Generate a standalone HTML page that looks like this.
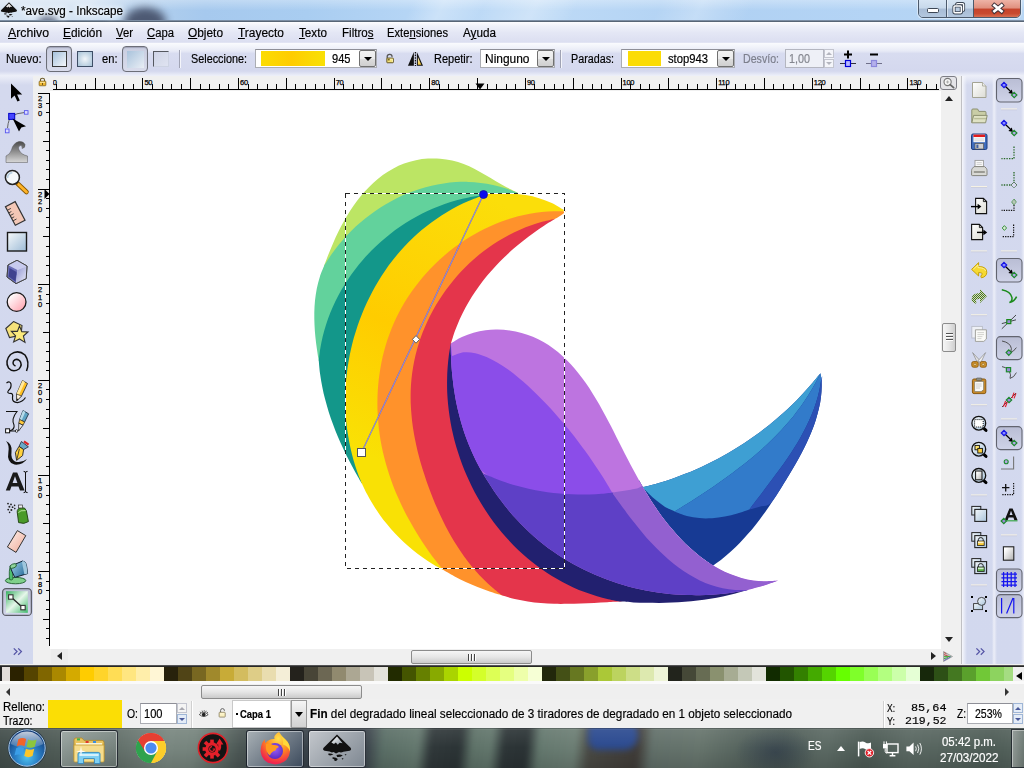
<!DOCTYPE html>
<html><head><meta charset="utf-8"><title>ave.svg - Inkscape</title>
<style>
*{box-sizing:border-box;margin:0;padding:0}
html,body{width:1024px;height:768px;overflow:hidden;background:#fff;font-family:"Liberation Sans",sans-serif;font-size:12px;color:#000}
.a{position:absolute}
.t{position:absolute;white-space:nowrap;line-height:14px;transform-origin:0 0;-webkit-text-stroke:0.18px currentColor}
#title{left:0;top:0;width:1024px;height:22px;background:linear-gradient(115deg,rgba(255,255,255,0) 40%,rgba(255,255,255,.28) 43%,rgba(255,255,255,.05) 47%,rgba(255,255,255,.3) 52%,rgba(255,255,255,0) 56%,rgba(255,255,255,0) 64%,rgba(255,255,255,.25) 68%,rgba(255,255,255,0) 73%),linear-gradient(90deg,#d6e4f3 0,#d2e2f3 9%,#b4d0ec 13%,#a6c9ee 20%,#a9cdf1 30%,#b8d7f6 42%,#bcd9f6 55%,#b0d1f3 70%,#b4d4f5 85%,#b8d6f4 100%)}
#titleline{left:0;top:20px;width:1024px;height:2px;background:linear-gradient(180deg,#8fa2ba,#46525f)}
#menubar{left:0;top:22px;width:1024px;height:21px;background:linear-gradient(180deg,#fdfdff 0,#f0f2fa 18%,#e4e7f5 50%,#dcdff1 94%,#e6e8f5 100%)}
#toolbar{left:0;top:42.5px;width:1024px;height:33.5px;background:linear-gradient(180deg,#fafbfe 0,#f1f3fa 4px,#e7eaf6 8px,#d8dcf0 10.5px,#d4d8ee 28px,#e4e7f5 31px,#eef0f9 100%)}
.tbx{background:linear-gradient(180deg,#eceef8 0,#d4d9ee 9px,#d2d8ee 100%)}
#canvasbg{left:33px;top:76px;width:929px;height:590px;background:#f0f0f0}
#canvas{left:50px;top:91px;width:891px;height:558px;background:#fff}
#palette{left:0;top:665px;width:1024px;height:18px;background:#f0f0f0}
#status{left:0;top:683px;width:1024px;height:46px;background:#f0f0f0}
#taskbar{left:0;top:728px;width:1024px;height:40px;background:#4d5a57}
.combo{position:absolute;background:#fff;border:1px solid #abadb3;border-top-color:#8e8f97}
.cbtn{position:absolute;background:linear-gradient(180deg,#f2f2f2 0,#ebebeb 50%,#dddddd 51%,#cfcfcf 100%);border:1px solid #707070;border-radius:2px}
.cbtn:after{content:"";position:absolute;left:50%;top:50%;margin-left:-4px;margin-top:-2px;border:4px solid transparent;border-top:4px solid #000;border-bottom:0}
.sep{position:absolute;width:2px;border-left:1px solid #a0a3b4;border-right:1px solid #f4f5fb}
.tog{position:absolute;border:1.3px solid #6c6e78;border-radius:4px;background:linear-gradient(180deg,#c9cde0,#d9dcec);box-shadow:inset 0 1px 1px rgba(90,92,110,.35)}
</style></head><body>
<div class="a" id="title"></div>
<div class="a" style="left:110px;top:0;width:70px;height:21px;overflow:hidden"><div class="a" style="left:14px;top:7px;width:42px;height:30px;border-radius:50%;background:#3c455e;filter:blur(4px);opacity:.85"></div></div>
<div class="a" style="left:30px;top:0;width:40px;height:21px;overflow:hidden"><div class="a" style="left:8px;top:14px;width:20px;height:16px;border-radius:50%;background:#4c556e;filter:blur(3px);opacity:.7"></div></div>
<div class="a" style="left:0;top:0;width:1024px;height:21px;background:linear-gradient(180deg,rgba(255,255,255,.3),rgba(255,255,255,0) 50%)"></div>
<div class="a" id="titleline"></div>
<svg class="a" style="left:0;top:1px" width="18" height="19" viewBox="0 0 18 19">
<path d="M9 1.2 L1 9.2 Q0.4 10.4 1.8 10.8 L4.6 11.2 Q6 12 7.2 11.4 L8.6 12.2 L10.2 11.4 Q11.4 12 12.6 11.3 L16 10.8 Q17.6 10.2 16.8 9 Z" fill="#111"/>
<path d="M9 2.4 L6 5.6 L7.4 6.4 L8.4 5.6 L9.4 6.8 L10.4 5.8 L12.2 6 Z" fill="#e8e8e8"/>
<path d="M4.2 12.4 Q6 12.2 7.2 13 Q5.6 13.8 4.2 13.2 Z M9 13.2 Q11 12.6 12.6 13.4 Q11 14.6 9.4 14.4 Z M6.4 14.6 Q8.4 14.4 9.6 15.6 Q9 17 7.6 16.6 Q8 15.6 6.4 15.2 Z M11.6 15 L12.8 15.2 L12.2 16 Z" fill="#111"/>
</svg>
<span class="t" style="left:21px;top:3.5px;font-size:12px;color:#000;transform:scaleX(0.9740);text-shadow:0 0 5px #fff,0 0 8px #fff,0 0 10px rgba(255,255,255,.8);">*ave.svg - Inkscape</span>
<div class="a" style="left:918px;top:-1px;width:103px;height:19px;border:1px solid #4c5a6c;border-radius:0 0 5px 5px;overflow:hidden;box-shadow:0 0 0 1px rgba(255,255,255,.45)">
<div class="a" style="left:0;top:0;width:28px;height:18px;background:linear-gradient(180deg,#d6e4f3 0,#c7d8ea 45%,#a8bcd5 50%,#b4c8df 100%);border-right:1px solid #4c5a6c"></div>
<div class="a" style="left:28px;top:0;width:27px;height:18px;background:linear-gradient(180deg,#d6e4f3 0,#c7d8ea 45%,#a8bcd5 50%,#b4c8df 100%);border-right:1px solid #4c5a6c;box-shadow:inset 1px 0 0 rgba(255,255,255,.5)"></div>
<div class="a" style="left:55px;top:0;width:47px;height:18px;background:linear-gradient(180deg,#eeb3a6 0,#e08f7e 45%,#c5432c 50%,#c84a30 75%,#dc7a5c 100%)"></div>
</div>
<svg class="a" style="left:918px;top:0" width="103" height="18" viewBox="0 0 103 18">
<rect x="9.5" y="8.5" width="11" height="4" fill="#fff" stroke="#3c4654" stroke-width="1" rx="1"/>
<rect x="38.6" y="3.6" width="7" height="7" fill="none" stroke="#3c4654" stroke-width="3" rx="1"/>
<rect x="38.6" y="3.6" width="7" height="7" fill="none" stroke="#fff" stroke-width="1.3" rx="1"/>
<rect x="36" y="6" width="7.4" height="6.8" fill="#b9cbe0" stroke="#3c4654" stroke-width="3.2" rx="1"/>
<rect x="36" y="6" width="7.4" height="6.8" fill="none" stroke="#fff" stroke-width="1.5" rx="1"/>
<path d="M76.4 5.4 L83.6 11.2 M83.6 5.4 L76.4 11.2" stroke="#40323a" stroke-width="4.6" stroke-linecap="square"/>
<path d="M76.4 5.4 L83.6 11.2 M83.6 5.4 L76.4 11.2" stroke="#fff" stroke-width="2.7" stroke-linecap="square"/>
</svg>
<div class="a" id="menubar"></div>
<span class="t" style="left:8px;top:26.3px;font-size:12.5px;color:#000;transform:scaleX(0.9835);"><u>A</u>rchivo</span>
<span class="t" style="left:63px;top:26.3px;font-size:12.5px;color:#000;transform:scaleX(0.9509);"><u>E</u>dición</span>
<span class="t" style="left:116px;top:26.3px;font-size:12.5px;color:#000;transform:scaleX(0.9052);"><u>V</u>er</span>
<span class="t" style="left:147px;top:26.3px;font-size:12.5px;color:#000;transform:scaleX(0.9033);"><u>C</u>apa</span>
<span class="t" style="left:188px;top:26.3px;font-size:12.5px;color:#000;transform:scaleX(0.9500);"><u>O</u>bjeto</span>
<span class="t" style="left:238px;top:26.3px;font-size:12.5px;color:#000;transform:scaleX(0.9549);"><u>T</u>rayecto</span>
<span class="t" style="left:298.5px;top:26.3px;font-size:12.5px;color:#000;transform:scaleX(0.9367);"><u>T</u>exto</span>
<span class="t" style="left:341.5px;top:26.3px;font-size:12.5px;color:#000;transform:scaleX(0.9256);">Filtro<u>s</u></span>
<span class="t" style="left:387px;top:26.3px;font-size:12.5px;color:#000;transform:scaleX(0.8956);">Exte<u>n</u>siones</span>
<span class="t" style="left:462.5px;top:26.3px;font-size:12.5px;color:#000;transform:scaleX(0.9366);">A<u>y</u>uda</span>
<div class="a" id="toolbar"></div>
<span class="t" style="left:6px;top:51.5px;font-size:12px;color:#000;transform:scaleX(0.9334);">Nuevo:</span>
<div class="tog" style="left:46px;top:46px;width:26px;height:26px"></div>
<div class="a" style="left:51.5px;top:51px;width:15.5px;height:15.5px;border:1.7px solid #383838;background:linear-gradient(135deg,#a6c2dc,#f4f7fb)"></div>
<div class="a" style="left:77px;top:51px;width:15.5px;height:15.5px;border:1.6px solid #3e4e66;background:radial-gradient(circle at 50% 50%,#f2f6fa 0,#b9cfe0 75%,#a8c2d8 100%)"></div>
<span class="t" style="left:102px;top:51.5px;font-size:12px;color:#000;transform:scaleX(0.9288);">en:</span>
<div class="tog" style="left:122px;top:46px;width:26px;height:26px"></div>
<div class="a" style="left:126.5px;top:50.5px;width:17px;height:17px;background:linear-gradient(135deg,#a9c3dc,#e9eef5)"></div>
<div class="a" style="left:153px;top:51px;width:16px;height:16px;border:1.5px solid;border-color:#55585f #cdd3e3 #cdd3e3 #55585f;background:linear-gradient(135deg,#cfd4e6,#dfe3f1)"></div>
<div class="sep" style="left:179px;top:50px;height:18px"></div>
<span class="t" style="left:190.5px;top:51.5px;font-size:12px;color:#000;transform:scaleX(0.9025);">Seleccione:</span>
<div class="combo" style="left:255px;top:49px;width:122px;height:19px"></div>
<div class="a" style="left:261px;top:51px;width:64px;height:15px;background:linear-gradient(90deg,#fbdc03 0,#ffcc00 48%,#fbd704 75%,#f9e005 100%)"></div>
<span class="t" style="left:331.5px;top:51.5px;font-size:12px;color:#000;transform:scaleX(0.9236);">945</span>
<div class="cbtn" style="left:359px;top:50px;width:17px;height:17px"></div>
<svg class="a" style="left:385px;top:53px" width="10" height="11" viewBox="0 0 12 13">
<path d="M2.6 6.4 V4.2 Q2.8 1.4 5.8 1.6 Q8.4 1.8 8.6 4.6" fill="none" stroke="#555" stroke-width="1.5"/>
<rect x="2.2" y="6" width="7.8" height="5.6" rx="0.6" fill="#f4e27a" stroke="#5a4a1a" stroke-width="1.1"/>
<rect x="3.4" y="7.2" width="2.2" height="1.6" fill="#6a5a20"/>
<path d="M6 7.4 H9 V10.6" stroke="#fff8c8" stroke-width="0.9" fill="none"/>
</svg>
<svg class="a" style="left:406px;top:50px" width="20" height="18" viewBox="0 0 20 18">
<defs><linearGradient id="gMi" x1="0" y1="0" x2="0.4" y2="1"><stop offset="0" stop-color="#fff8d0"/><stop offset="1" stop-color="#f2c53a"/></linearGradient></defs>
<path d="M1.9 15.8 L7.9 15.8 L7.9 2 Z" fill="#111"/>
<path d="M10.9 2 L10.9 15.8 L17 15.8 Z" fill="#111"/>
<path d="M11.9 7 L11.9 14.8 L15.3 14.8 Z" fill="url(#gMi)"/>
<path d="M9.4 2 V16" stroke="#111" stroke-width="1.3" stroke-dasharray="1.6 1"/>
</svg>
<span class="t" style="left:434px;top:51.5px;font-size:12px;color:#000;transform:scaleX(0.9160);">Repetir:</span>
<div class="combo" style="left:480px;top:49px;width:75px;height:19px"></div>
<span class="t" style="left:485px;top:51.5px;font-size:12px;color:#000;transform:scaleX(0.9955);">Ninguno</span>
<div class="cbtn" style="left:537px;top:50px;width:17px;height:17px"></div>
<div class="sep" style="left:560px;top:50px;height:18px"></div>
<span class="t" style="left:571px;top:51.5px;font-size:12px;color:#000;transform:scaleX(0.8953);">Paradas:</span>
<div class="combo" style="left:621px;top:49px;width:114px;height:19px"></div>
<div class="a" style="left:627.5px;top:51px;width:33px;height:15px;background:#fbdc05"></div>
<span class="t" style="left:667.5px;top:51.5px;font-size:12px;color:#000;transform:scaleX(0.9367);">stop943</span>
<div class="cbtn" style="left:717px;top:50px;width:17px;height:17px"></div>
<span class="t" style="left:743px;top:51.5px;font-size:12px;color:#7c7f8c;transform:scaleX(0.8848);">Desvío:</span>
<div class="a" style="left:785px;top:49px;width:39px;height:19px;background:#eef0f7;border:1px solid #b4b6c0"></div>
<span class="t" style="left:789px;top:51.5px;font-size:12px;color:#84868f;transform:scaleX(0.8990);">1,00</span>
<div class="a" style="left:824px;top:49px;width:10px;height:19px;background:#f0f1f7">
<div class="a" style="left:0;top:0;width:10px;height:9px;border:1px solid #c3c5cf;background:#f4f5fa"></div>
<div class="a" style="left:0;top:10px;width:10px;height:9px;border:1px solid #c3c5cf;background:#f4f5fa"></div>
<div class="a" style="left:2px;top:3px;border:3px solid transparent;border-bottom:3px solid #b3b5be;border-top:0"></div>
<div class="a" style="left:2px;top:13px;border:3px solid transparent;border-top:3px solid #b3b5be;border-bottom:0"></div>
</div>
<svg class="a" style="left:839px;top:48px" width="46" height="24" viewBox="0 0 46 24">
<path d="M5 6.5 H13 M9 2.5 V10.5" stroke="#000" stroke-width="2"/>
<path d="M1 15.5 H17" stroke="#30303a" stroke-width="1"/>
<rect x="6.5" y="12.5" width="5" height="6" fill="#b8b8ff" stroke="#0000d8" stroke-width="1.2"/>
<path d="M31 6.5 H39" stroke="#000" stroke-width="2"/>
<path d="M27 15.5 H43" stroke="#70708a" stroke-width="1"/>
<rect x="32.5" y="12.5" width="5" height="6" fill="#b4b0ec" stroke="#8c88dc" stroke-width="1.2"/>
</svg>
<div class="a tbx" style="left:0;top:76px;width:33px;height:590px"></div>
<svg class="a" style="left:0;top:76px" width="34" height="590" viewBox="0 76 34 590">
<defs>
<linearGradient id="gTw" x1="0" y1="0" x2="0" y2="1"><stop offset="0" stop-color="#4a4a4a"/><stop offset="1" stop-color="#d8d8d8"/></linearGradient>
<linearGradient id="gRc" x1="0" y1="0" x2="1" y2="1"><stop offset="0" stop-color="#f7fafc"/><stop offset="1" stop-color="#9dbbd6"/></linearGradient>
<linearGradient id="gCi" x1="0" y1="0" x2="1" y2="1"><stop offset="0.15" stop-color="#ffffff"/><stop offset="1" stop-color="#ff9aa8"/></linearGradient>
<linearGradient id="gGr" x1="0" y1="0" x2="1" y2="1"><stop offset="0" stop-color="#38b062"/><stop offset="0.5" stop-color="#e6f6ea"/><stop offset="1" stop-color="#3db868"/></linearGradient><linearGradient id="gPrL" x1="0" y1="0" x2="0" y2="1"><stop offset="0" stop-color="#b9bdd2"/><stop offset="1" stop-color="#d2d6ea"/></linearGradient><linearGradient id="gBk" x1="0" y1="0" x2="1" y2="0.6"><stop offset="0" stop-color="#a8d4e4"/><stop offset="0.5" stop-color="#6aa4c8"/><stop offset="1" stop-color="#2f6f9c"/></linearGradient>
<linearGradient id="gBx" x1="0" y1="0" x2="1" y2="1"><stop offset="0" stop-color="#8f93cf"/><stop offset="1" stop-color="#eef0fb"/></linearGradient>
<linearGradient id="gEr" x1="0" y1="0" x2="1" y2="1"><stop offset="0" stop-color="#fff4ee"/><stop offset="1" stop-color="#efa896"/></linearGradient>
</defs>
<!-- select arrow -->
<path d="M11 83.5 L11 98.8 L14.6 95.6 L17.4 101.6 L19.8 100.5 L17.1 94.6 L22.2 94.4 Z" fill="#000"/>
<!-- node tool -->
<path d="M7.5 128 Q8.5 118 12 116.5 Q16 113 24 112.6" fill="none" stroke="#555" stroke-width="0.9"/>
<rect x="8.7" y="113.4" width="6" height="6" fill="#4646ff" stroke="#0000c8" stroke-width="1"/>
<rect x="24.4" y="110.6" width="3.6" height="3.6" fill="#dcdcff" stroke="#5858ee" stroke-width="0.9"/>
<rect x="5.4" y="129" width="3.6" height="3.8" fill="#dcdcff" stroke="#5858ee" stroke-width="0.9"/>
<path d="M12.6 118.6 L19 131.6 L21.3 127.4 L26 126.2 Z" fill="#000"/>
<!-- tweak -->
<path d="M6 162.5 V156 Q10 154.5 11.5 150 Q13 143 19 141.5 Q23.5 141 25 144.5 Q25.5 148 22 148.5 Q23 146 20.5 145.6 Q17.5 146.5 19 150 Q21 154.5 27.5 156 V162.5 Z" fill="url(#gTw)" stroke="#555" stroke-width="0.5"/>
<!-- zoom -->
<path d="M17.5 183.5 L26.5 192" stroke="#8a5a00" stroke-width="4.6" stroke-linecap="round"/>
<path d="M18.6 184.6 L26.5 192" stroke="#ffb429" stroke-width="2.8" stroke-linecap="round"/>
<circle cx="12.4" cy="177.4" r="7" fill="#f4f8fb" stroke="#222" stroke-width="1.5"/>
<path d="M7.6 178 A5 5 0 0 1 12.4 172.6" fill="none" stroke="#b9d0e2" stroke-width="1.6"/>
<!-- measure -->
<g transform="rotate(-28 15 213)"><rect x="9.5" y="203" width="11" height="21" fill="#f3c7b6" stroke="#333" stroke-width="1.2"/>
<path d="M9.5 207 h4 M9.5 210 h3 M9.5 213 h4 M9.5 216 h3 M9.5 219 h4" stroke="#333" stroke-width="0.8"/></g>
<!-- rect -->
<rect x="7.5" y="232.5" width="19" height="18.5" fill="url(#gRc)" stroke="#1a1a1a" stroke-width="1.4"/>
<!-- 3d box -->
<path d="M17 260.3 L27 266 L26.2 278.6 L16 283.6 L7 277 L8 265 Z" fill="#e9ebfa" stroke="#444" stroke-width="1"/>
<path d="M8 265 L17 260.3 L27 266 L17.5 270 Z" fill="#c8cbee"/>
<path d="M8 265 L17.5 270 L16 283.6 L7 277 Z" fill="#6d70b8"/>
<path d="M9.5 268 L16.5 272 L15.5 281.5 L8.6 276.5 Z" fill="#3f428f"/>
<path d="M17.5 270 L27 266 L26.2 278.6 L16 283.6 Z" fill="url(#gBx)"/>
<path d="M17 260.3 L27 266 L26.2 278.6 L16 283.6 L7 277 L8 265 Z" fill="none" stroke="#444" stroke-width="1"/>
<!-- circle -->
<circle cx="16.6" cy="302" r="9.4" fill="url(#gCi)" stroke="#1a1a1a" stroke-width="1.3"/>
<!-- star -->
<path d="M13.5 321.6 L22 325.5 L21 335 L9.5 337.5 L5.8 328.5 Z" fill="#f6e27a" stroke="#333" stroke-width="1.1"/>
<path d="M19.5 326 L21.8 331.6 L28 332 L23.4 336 L25 342.4 L19.5 339 L13.6 342 L15.6 335.8 L11.4 331.4 L17.4 331.4 Z" fill="#fbea7c" stroke="#333" stroke-width="1.1"/>
<!-- spiral -->
<path d="M15.5 366 Q12 364.5 13.5 361 Q16 358 19.5 360.5 Q23 364.5 19 369 Q13 373 8.5 368 Q4.5 361 10.5 354.5 Q18 349 25 355 Q30 362 26.5 371" fill="none" stroke="#111" stroke-width="1.5"/>
<!-- pencil -->
<path d="M6.5 383 Q10 380.5 11 384 Q11.5 388 8.5 390.5 Q6.5 393 10 393.5 Q13.5 393 12.5 397.5 Q12 402.5 17.5 402.6 Q22.5 402 25.5 397.5" fill="none" stroke="#111" stroke-width="1.2"/>
<path d="M22.5 380.5 L27.5 383.5 L21.5 396 L16.8 400.8 L16.5 394 Z" fill="#ffc022" stroke="#333" stroke-width="0.9"/>
<path d="M22.5 380.5 L25 382 L19 395 L16.5 394 Z" fill="#ffe9a0"/>
<path d="M16.5 394 L21.5 396 L16.8 400.8 Z" fill="#fff3dc" stroke="#333" stroke-width="0.7"/>
<path d="M16.7 398.6 L18.4 399.2 L16.8 400.8 Z" fill="#111"/>
<!-- pen / bezier -->
<path d="M6 411.5 H17 Q11 419 14 425 Q15 429.5 9.5 431" fill="none" stroke="#111" stroke-width="1.1"/>
<rect x="5.6" y="428.8" width="4" height="4" fill="#fff" stroke="#111" stroke-width="1"/>
<path d="M10 431 H16" stroke="#111" stroke-width="1"/><circle cx="16.6" cy="431" r="1.3" fill="#fff" stroke="#111" stroke-width="0.8"/>
<path d="M23 410.5 L28.6 413.8 L24.6 422 L19.6 419.4 Z" fill="#5fa4c4" stroke="#234" stroke-width="0.9"/>
<path d="M23 410.5 L25.4 412 L21.6 420.4 L19.6 419.4 Z" fill="#b7dbe9"/>
<path d="M19.6 419.4 L24.6 422 L23 425.2 L18.8 423.2 Z" fill="#ffc93a" stroke="#333" stroke-width="0.8"/>
<path d="M18.8 423.2 L23 425.2 L18.6 431 Z" fill="#e8e8e8" stroke="#222" stroke-width="0.8"/>
<!-- calligraphy -->
<path d="M6 441 Q12.5 444 11.5 451.5 Q10.5 459 15 461.5 Q21 463.5 27 459 Q22.5 465.5 14.5 464.6 Q6.5 462.6 8.4 452 Q9.5 445 6 441 Z" fill="#111"/>
<path d="M21.4 441.5 L28.4 446.8 L23.6 449.6 L19 446.4 Z" fill="#6aa9c8" stroke="#223" stroke-width="0.8"/>
<path d="M24 441.4 L28.6 444.6" stroke="#d22" stroke-width="2"/>
<path d="M19 446.4 L23.6 449.6 L22.6 455.6 L16.6 460.4 L15.4 452.6 Z" fill="#ffd23f" stroke="#222" stroke-width="0.9"/>
<path d="M19.4 448.8 L16.9 459.4" stroke="#222" stroke-width="0.8"/>
<!-- text -->
<path d="M5.8 490.6 L13 472.6 L17.2 472.6 L24.6 490.6 L20 490.6 L18.5 486.4 L11.4 486.4 L10 490.6 Z M12.6 483 L17.4 483 L15 476.2 Z" fill="#1a1a1a" fill-rule="evenodd"/>
<path d="M25.5 471.8 V492.2 M23.6 471.4 Q25.5 471.4 25.5 472.8 Q25.5 471.4 27.6 471.4 M23.6 492.6 Q25.5 492.6 25.5 491.2 Q25.5 492.6 27.6 492.6" fill="none" stroke="#111" stroke-width="1"/>
<!-- spray -->
<path d="M17.2 512 Q17 508.4 21.4 507.6 Q25.6 507.4 26.4 510.8 L28.4 521.6 Q24.4 524.6 18.6 522.6 Z" fill="#4a9a2a" stroke="#1d3d10" stroke-width="0.9"/>
<path d="M18.4 512.6 Q20 510 25.6 510.6" fill="none" stroke="#b7e39a" stroke-width="1"/>
<rect x="18.6" y="505" width="4" height="3" fill="#eee" stroke="#333" stroke-width="0.7"/>
<g fill="#222"><circle cx="8" cy="503.6" r="0.9"/><circle cx="11" cy="504.4" r="0.9"/><circle cx="9.4" cy="506.8" r="1"/><circle cx="12.6" cy="507.2" r="0.9"/><circle cx="14.6" cy="505.4" r="0.8"/><circle cx="8.2" cy="509.6" r="0.9"/><circle cx="11.4" cy="510" r="1"/><circle cx="14.8" cy="508.6" r="0.8"/><circle cx="9.6" cy="512.4" r="0.8"/></g>
<!-- eraser -->
<path d="M17.4 530.6 L25.8 535.6 L16 552.4 L7.4 547 Z" fill="url(#gEr)" stroke="#333" stroke-width="1"/>
<!-- bucket -->
<ellipse cx="15.6" cy="580.6" rx="10.2" ry="3.2" fill="#7fd08b" stroke="#1d5a2a" stroke-width="0.9"/>
<path d="M10.6 565.6 Q8.6 570 9.6 579.6 Q11.6 580.6 13 579 Q12 573 13.4 568 Z" fill="#4fbf6f" stroke="#1d5a2a" stroke-width="0.8"/>
<path d="M10 566.4 L22.6 561 Q25.6 561.4 26.4 564.6 L27.6 573.6 L14.8 577.4 Q12 572 10 566.4 Z" fill="url(#gBk)" stroke="#123" stroke-width="1"/>
<path d="M22.6 561 Q25.6 561.4 26.4 564.6 L27.6 573.6 L24.4 574.6 L22 562.4 Z" fill="#9fc7de"/>
<ellipse cx="13.2" cy="566" rx="3.4" ry="2" transform="rotate(-23 13.2 566)" fill="#8fd49c" stroke="#1d5a2a" stroke-width="0.8"/>
<!-- gradient tool (active) -->
<rect x="2.6" y="588.6" width="28.8" height="26.8" rx="3.5" fill="url(#gPrL)" stroke="#5c5e68" stroke-width="1.3"/>
<rect x="6" y="591.2" width="21.8" height="21.6" fill="url(#gGr)"/>
<path d="M11.6 597.6 L22.6 607.6" stroke="#222" stroke-width="1.3"/>
<rect x="8.6" y="594.8" width="4.4" height="4.4" fill="#fff" stroke="#333" stroke-width="1.1"/>
<rect x="20.8" y="605.4" width="4.4" height="4.4" fill="#fff" stroke="#333" stroke-width="1.1"/>
<!-- chevrons -->
<path d="M13.8 648.4 L17 651.6 L13.8 654.8 M18.2 648.4 L21.4 651.6 L18.2 654.8" fill="none" stroke="#5656a6" stroke-width="1.3"/>
</svg>
<div class="a" style="left:958px;top:76px;width:8px;height:590px;background:#f0f0f0"></div>
<div class="a" style="left:961px;top:76px;width:1px;height:590px;background:#c4c4c4"></div>
<div class="a tbx" style="left:962px;top:76px;width:31px;height:589px"></div>
<div class="a tbx" style="left:993px;top:76px;width:31px;height:589px"></div>
<div class="a" style="left:962px;top:76px;width:5px;height:589px;background:linear-gradient(90deg,#f6f7fc,rgba(246,247,252,0))"></div>
<div class="a" style="left:992px;top:76px;width:5px;height:589px;background:linear-gradient(90deg,rgba(240,241,250,0),#eceef8 40%,rgba(240,241,250,0))"></div>
<div class="a" style="left:1021px;top:76px;width:3px;height:589px;background:linear-gradient(90deg,rgba(240,241,250,0),#eceef8)"></div>
<svg class="a" style="left:962px;top:76px" width="62" height="590" viewBox="962 76 62 590"><defs>
<linearGradient id="gPr" x1="0" y1="0" x2="0" y2="1"><stop offset="0" stop-color="#b9bdd4"/><stop offset="1" stop-color="#cfd3e8"/></linearGradient>
<linearGradient id="gPg" x1="0" y1="0" x2="1" y2="1"><stop offset="0" stop-color="#ffffff"/><stop offset="1" stop-color="#dcdcd4"/></linearGradient>
<linearGradient id="gBl" x1="0" y1="0" x2="1" y2="1"><stop offset="0" stop-color="#f4f8fb"/><stop offset="1" stop-color="#a9c3da"/></linearGradient>
<linearGradient id="gPp" x1="0" y1="0" x2="1" y2="1"><stop offset="0.2" stop-color="#ffffff"/><stop offset="1" stop-color="#b0b0b0"/></linearGradient>
</defs><path d="M972.5 82.5 H982.5 L986 86 V97.5 H972.5 Z" fill="url(#gPg)" stroke="#a4a494" stroke-width="1"/><path d="M982.5 82.5 V86 H986" fill="#eee" stroke="#a4a494" stroke-width="0.8"/><path d="M971.8 122.6 V110 Q971.8 109 973 109 H977.6 L978.8 111.4 H985 Q986 111.4 986 112.6 V115" fill="#c9cda6" stroke="#8c9070" stroke-width="1"/><path d="M971.8 122.8 L973.6 115.4 H987.2 L985.6 122.8 Z" fill="#dfe2c4" stroke="#8c9070" stroke-width="1"/><path d="M974.2 118.6 H986" stroke="#b9bd98" stroke-width="1.4"/><rect x="971.5" y="134" width="15.5" height="15.5" rx="1.5" fill="#3f6cbc" stroke="#1f3f80" stroke-width="1"/><rect x="973.4" y="134.6" width="11.6" height="7.6" fill="#f4f4f4"/><rect x="973.4" y="134.6" width="11.6" height="2.4" fill="#e31c1c"/><path d="M974.4 139 h9.6 M974.4 140.6 h9.6" stroke="#d0d0d0" stroke-width="0.6"/><rect x="975" y="143.6" width="8.6" height="5.4" fill="#cfcfcf" stroke="#555" stroke-width="0.7"/><rect x="976.4" y="144.6" width="2" height="3.4" fill="#3f5fa0"/><rect x="975" y="160.4" width="8.4" height="6.6" fill="#fafafa" stroke="#9a9a9a" stroke-width="0.9"/><path d="M976.6 162.6 h5.2 M976.6 164.4 h5.2" stroke="#c4c4c4" stroke-width="0.8"/><path d="M971.6 175 V170.4 Q971.6 169.4 972.4 168.4 L974 166.6 H984.6 L986.4 168.4 Q987 169.4 987 170.4 V175 Q987 175.6 986.2 175.6 H972.4 Q971.6 175.6 971.6 175 Z" fill="#d9d9d5" stroke="#85857d" stroke-width="1"/><rect x="973.8" y="171.2" width="11" height="1.6" fill="#8a8a84"/><path d="M971 186.6 h16" stroke="#f6f2e4" stroke-width="1.2"/><path d="M971 187.5 h16" stroke="#c2c4d6" stroke-width="0.6"/><path d="M975.6 198.4 H983.4 L986.6 201.6 V213.6 H975.6 Z" fill="url(#gPg)" stroke="#111" stroke-width="1.1"/><path d="M983.4 198.4 V201.6 H986.6" fill="none" stroke="#111" stroke-width="0.9"/><path d="M971 206.6 H978" stroke="#000" stroke-width="1.4"/><path d="M981.4 206.6 l-3.8 -2.8 v5.6 Z" fill="#000"/><path d="M971.6 224.4 H979.4 L982.6 227.6 V239.6 H971.6 Z" fill="url(#gPg)" stroke="#111" stroke-width="1.1"/><path d="M979.4 224.4 V227.6 H982.6" fill="none" stroke="#111" stroke-width="0.9"/><path d="M977 232.4 H984" stroke="#000" stroke-width="1.4"/><path d="M987.2 232.4 l-3.8 -2.8 v5.6 Z" fill="#000"/><path d="M971 251 h16" stroke="#f6f2e4" stroke-width="1.2"/><path d="M971 251.9 h16" stroke="#c2c4d6" stroke-width="0.6"/><path d="M971.6 269.4 L978.6 262.6 V266.6 Q986.8 266.4 986.8 272.4 Q986.6 276.8 981.4 277.8 Q980 276 981.8 274.8 Q983.4 272.6 978.6 272.6 V276 Z" fill="#f6d932" stroke="#c29b00" stroke-width="0.9"/><path d="M973.4 269.2 L978 265 V267.6 Q985 267.8 985.6 271" fill="none" stroke="#fdf0a0" stroke-width="0.9"/><defs><pattern id="dth" width="2" height="2" patternUnits="userSpaceOnUse"><rect width="2" height="2" fill="#cfd6c0"/><rect width="1" height="1" fill="#4a7a1e"/><rect x="1" y="1" width="1" height="1" fill="#4a7a1e"/></pattern></defs><path d="M987 296 L980 289 V293 Q971.6 293 971.6 299 Q972 302.6 975.6 303.8 Q977.4 302 976 300.6 Q975.4 298.8 980 299 V303 Z" fill="url(#dth)"/><path d="M971 314.8 h16" stroke="#f6f2e4" stroke-width="1.2"/><path d="M971 315.7 h16" stroke="#c2c4d6" stroke-width="0.6"/><rect x="971.8" y="326.4" width="10.6" height="11.6" fill="#eef0f6" stroke="#b9bcc8" stroke-width="0.9"/><path d="M975.4 329.8 H986.4 V339 L983.8 341.4 H975.4 Z" fill="#fbfbf8" stroke="#9a9a94" stroke-width="0.9"/><path d="M977.4 332.6 h6.6 M977.4 334.6 h6.6 M977.4 336.6 h5 M977.4 338.6 h4" stroke="#c8c8c4" stroke-width="0.8"/><path d="M972.6 352.6 L977.4 362.6 L980.4 361 Z" fill="#e4e4e4" stroke="#8a8a8a" stroke-width="0.7"/><path d="M985.6 352.6 L980.8 362.6 L977.8 361 Z" fill="#f0f0f0" stroke="#8a8a8a" stroke-width="0.7"/><rect x="971.8" y="361.6" width="6.4" height="5.6" rx="1.6" fill="#d0922a" stroke="#8a5a10" stroke-width="0.9"/><rect x="980" y="361.6" width="6.4" height="5.6" rx="1.6" fill="#d0922a" stroke="#8a5a10" stroke-width="0.9"/><circle cx="975" cy="364.4" r="1.2" fill="#f0d8a0" stroke="#8a5a10" stroke-width="0.6"/><circle cx="983.2" cy="364.4" r="1.2" fill="#f0d8a0" stroke="#8a5a10" stroke-width="0.6"/><rect x="972.4" y="379" width="13.4" height="14.6" rx="1.6" fill="#c98a28" stroke="#8a5a10" stroke-width="1"/><path d="M974.6 381.4 H983.6 V389.6 L981.2 391.6 H974.6 Z" fill="#fbfbf8" stroke="#7a7a70" stroke-width="0.7"/><path d="M976 384 h5.6 M976 386 h5.6 M976 388 h4" stroke="#c4c4c0" stroke-width="0.8"/><rect x="976.4" y="378" width="5.4" height="2.6" rx="0.8" fill="#8e8e86" stroke="#55554d" stroke-width="0.6"/><path d="M971 404.8 h16" stroke="#f6f2e4" stroke-width="1.2"/><path d="M971 405.7 h16" stroke="#c2c4d6" stroke-width="0.6"/><path d="M983.6 428.2 L986 430.4" stroke="#000" stroke-width="3" stroke-linecap="round"/><circle cx="978.8" cy="423.2" r="6.9" fill="url(#gBl)" stroke="#111" stroke-width="1.3"/><path d="M983.6 454.2 L986 456.4" stroke="#000" stroke-width="3" stroke-linecap="round"/><circle cx="978.8" cy="449.2" r="6.9" fill="url(#gBl)" stroke="#111" stroke-width="1.3"/><path d="M983.6 480.4 L986 482.6" stroke="#000" stroke-width="3" stroke-linecap="round"/><circle cx="978.8" cy="475.4" r="6.9" fill="url(#gBl)" stroke="#111" stroke-width="1.3"/><rect x="974.6" y="419.6" width="8.6" height="7.4" fill="#fff" stroke="#111" stroke-width="1" stroke-dasharray="1 1"/><rect x="975" y="445.4" width="4.4" height="4.4" fill="#ffe36a" stroke="#111" stroke-width="0.9"/><rect x="977.8" y="448.4" width="4.6" height="4.6" fill="#ffd23a" stroke="#111" stroke-width="0.9"/><rect x="975.6" y="471" width="6.4" height="8.8" fill="url(#gPp)" stroke="#111" stroke-width="1"/><path d="M971 495 h16" stroke="#f6f2e4" stroke-width="1.2"/><path d="M971 495.9 h16" stroke="#c2c4d6" stroke-width="0.6"/><rect x="971.8" y="506.4" width="9" height="8.6" fill="url(#gBl)" stroke="#222" stroke-width="1"/><rect x="974.8" y="509.4" width="11.8" height="12" fill="url(#gBl)" stroke="#222" stroke-width="1.1"/><rect x="971.8" y="532.6" width="9" height="8.6" fill="url(#gBl)" stroke="#222" stroke-width="1"/><rect x="974.8" y="535.6" width="11.8" height="12" fill="url(#gBl)" stroke="#222" stroke-width="1.1"/><path d="M978.4 541.2 v-1.6 q0 -2 2.4 -2 q2.4 0 2.4 2 v1.6" fill="none" stroke="#222" stroke-width="1"/><rect x="977.4" y="541" width="6.8" height="4.6" fill="#f8c830" stroke="#222" stroke-width="0.8"/><rect x="978" y="541.6" width="5.6" height="1.6" fill="#fff" opacity=".75"/><rect x="971.8" y="558.6" width="9" height="8.6" fill="url(#gBl)" stroke="#222" stroke-width="1"/><rect x="974.8" y="561.6" width="11.8" height="12" fill="url(#gBl)" stroke="#222" stroke-width="1.1"/><path d="M978.4 567.2 v-1.6 q0 -2 2.4 -2 q2.4 0 2.4 2 v1.6" fill="none" stroke="#222" stroke-width="1"/><rect x="977.4" y="567" width="6.8" height="4.6" fill="#58b040" stroke="#222" stroke-width="0.8"/><rect x="978" y="567.6" width="5.6" height="1.6" fill="#fff" opacity=".75"/><path d="M971 585 h16" stroke="#f6f2e4" stroke-width="1.2"/><path d="M971 585.9 h16" stroke="#c2c4d6" stroke-width="0.6"/><rect x="973.6" y="603.6" width="9" height="6" fill="url(#gBl)" stroke="#333" stroke-width="0.9"/><circle cx="981.6" cy="601.4" r="4" fill="url(#gBl)" stroke="#333" stroke-width="0.9"/><rect x="971" y="596" width="2" height="2" fill="#000"/><rect x="985" y="596" width="2" height="2" fill="#000"/><rect x="971" y="610" width="2" height="2" fill="#000"/><rect x="985" y="610" width="2" height="2" fill="#000"/><path d="M976.4 648.4 L979.6 651.6 L976.4 654.8 M980.8 648.4 L984 651.6 L980.8 654.8" fill="none" stroke="#5656a6" stroke-width="1.3"/><rect x="996.5" y="78.5" width="25.5" height="23.5" rx="4" fill="url(#gPr)" stroke="#62646f" stroke-width="1.1"/><path d="M1005.5 86.5 L1011.6 92.4" stroke="#000" stroke-width="1.3"/><path d="M1013 94 l-4.6 -1 l3.4 -3.6 Z" fill="#000"/><path d="M1004 82.3 l2.7 2.7 l-2.7 2.7 l-2.7 -2.7 Z" fill="#8c8cff" stroke="#1414e6" stroke-width="1.2"/><path d="M1014.2 92.3 l2.7 2.7 l-2.7 2.7 l-2.7 -2.7 Z" fill="#b4a8e8" stroke="#1e8a2e" stroke-width="1.2"/><path d="M1001 109 h16" stroke="#f6f2e4" stroke-width="1.2"/><path d="M1001 109.9 h16" stroke="#c2c4d6" stroke-width="0.6"/><path d="M1005.5 124.5 L1011.6 130.4" stroke="#000" stroke-width="1.3"/><path d="M1013 132 l-4.6 -1 l3.4 -3.6 Z" fill="#000"/><path d="M1004 120.3 l2.7 2.7 l-2.7 2.7 l-2.7 -2.7 Z" fill="#8c8cff" stroke="#1414e6" stroke-width="1.2"/><path d="M1014.2 130.3 l2.7 2.7 l-2.7 2.7 l-2.7 -2.7 Z" fill="#b4a8e8" stroke="#1e8a2e" stroke-width="1.2"/><path d="M1014 146.6 V158.6 H1001.4" stroke="#2a6a2a" stroke-width="1.3" stroke-dasharray="1.4 1.2" fill="none"/><path d="M1014 172 V182 M1010.4 185 H1001.4" stroke="#2a6a2a" stroke-width="1.3" stroke-dasharray="1.4 1.2" fill="none"/><path d="M1014 182 l3 3 l-3 3 l-3 -3 Z" fill="#d8d8ee" stroke="#2a5a2a" stroke-width="1" stroke-dasharray="1 0.6"/><path d="M1014 205 V210.4 H1001.6" stroke="#111" stroke-width="1.2" stroke-dasharray="1.3 1.1" fill="none"/><path d="M1014 199 l2.4 3 l-2.4 3 l-2.4 -3 Z" fill="#b8c8b8" stroke="#2a7a2a" stroke-width="0.9" stroke-dasharray="1 0.5"/><path d="M1013.6 224.6 V236.6 H1001.6" stroke="#111" stroke-width="1.2" stroke-dasharray="1.3 1.1" fill="none"/><path d="M1004.4 225.6 l2.2 2.4 l-2.2 2.4 l-2.2 -2.4 Z" fill="#d8e8d8" stroke="#2a8a2a" stroke-width="0.9"/><path d="M1001 251 h16" stroke="#f6f2e4" stroke-width="1.2"/><path d="M1001 251.9 h16" stroke="#c2c4d6" stroke-width="0.6"/><rect x="996.5" y="258.5" width="25.5" height="23.5" rx="4" fill="url(#gPr)" stroke="#62646f" stroke-width="1.1"/><path d="M1005.5 266.5 L1011.6 272.4" stroke="#000" stroke-width="1.3"/><path d="M1013 274 l-4.6 -1 l3.4 -3.6 Z" fill="#000"/><path d="M1004 262.3 l2.7 2.7 l-2.7 2.7 l-2.7 -2.7 Z" fill="#8c8cff" stroke="#1414e6" stroke-width="1.2"/><path d="M1014.2 272.3 l2.7 2.7 l-2.7 2.7 l-2.7 -2.7 Z" fill="#b4a8e8" stroke="#1e8a2e" stroke-width="1.2"/><path d="M1001.8 289.8 Q1010.6 291.4 1012 297.6 Q1012.4 301.4 1009.4 302.4 Q1014.4 301.6 1016.6 296.6" fill="none" stroke="#1a8a1a" stroke-width="1.5"/><path d="M1001.8 328.8 L1016 315 M1001.8 323.6 L1016 319.8" stroke="#222" stroke-width="0.8"/><rect x="1006.8" y="319.6" width="4" height="4" fill="#9a8ad8" stroke="#1a8a1a" stroke-width="1.2"/><rect x="996.5" y="336.6" width="25.5" height="23" rx="4" fill="url(#gPr)" stroke="#62646f" stroke-width="1.1"/><path d="M1002 341 Q1010.4 342.6 1011.4 348.6 Q1011.6 351.6 1009 352.6 Q1014 352 1016.4 347.6" fill="none" stroke="#444" stroke-width="0.9"/><path d="M1008.8 349.9 l2.7 2.7 l-2.7 2.7 l-2.7 -2.7 Z" fill="#9a8ad8" stroke="#1e8a2e" stroke-width="1.2"/><path d="M1002 366.6 Q1006 367.4 1008.6 369.6 M1009.4 371.6 Q1011.4 374.6 1010 378.4 Q1014 377.6 1016.4 372.6" fill="none" stroke="#444" stroke-width="0.9"/><rect x="1006.4" y="367.6" width="4.2" height="4.2" fill="#9a8ad8" stroke="#1e8a2e" stroke-width="1.2"/><path d="M1002 407 L1016 393" stroke="#222" stroke-width="0.8"/><path d="M1003.4 406.6 L1005.6 401 M1005.4 407 L1007.4 401.6 M1012 398 L1014 392.6 M1014 398.4 L1016 393.4" stroke="#e01a2a" stroke-width="1.1"/><path d="M1009 397.3 l2.7 2.7 l-2.7 2.7 l-2.7 -2.7 Z" fill="#9a8ad8" stroke="#1e8a2e" stroke-width="1.2"/><path d="M1001 419 h16" stroke="#f6f2e4" stroke-width="1.2"/><path d="M1001 419.9 h16" stroke="#c2c4d6" stroke-width="0.6"/><rect x="996.5" y="426.6" width="25.5" height="23" rx="4" fill="url(#gPr)" stroke="#62646f" stroke-width="1.1"/><path d="M1005.5 434.5 L1011.6 440.4" stroke="#000" stroke-width="1.3"/><path d="M1013 442 l-4.6 -1 l3.4 -3.6 Z" fill="#000"/><path d="M1004 430.3 l2.7 2.7 l-2.7 2.7 l-2.7 -2.7 Z" fill="#8c8cff" stroke="#1414e6" stroke-width="1.2"/><path d="M1014.2 440.3 l2.7 2.7 l-2.7 2.7 l-2.7 -2.7 Z" fill="#b4a8e8" stroke="#1e8a2e" stroke-width="1.2"/><path d="M1013.6 456.6 V469 H1001" fill="none" stroke="#777" stroke-width="1.1"/><circle cx="1006.2" cy="461.8" r="2" fill="#b8a8e8" stroke="#1e8a2e" stroke-width="1.1"/><path d="M1002 487.6 h7.4 M1005.7 484 v7.4" stroke="#111" stroke-width="1.3"/><path d="M1013.6 483 V494.6 H1001.4" stroke="#111" stroke-width="1.2" stroke-dasharray="1.3 1.1" fill="none"/><path d="M1004.6 520.2 L1009.4 508.4 L1012.6 508.4 L1017.6 520.2 L1014.4 520.2 L1013.4 517.4 L1008.6 517.4 L1007.6 520.2 Z M1009.6 515 L1012.6 515 L1011 510.8 Z" fill="#111" fill-rule="evenodd"/><path d="M1003 520.8 H1017.4" stroke="#3aa84a" stroke-width="1.2"/><path d="M1003.8 518.3 l2.7 2.7 l-2.7 2.7 l-2.7 -2.7 Z" fill="#9a8ad8" stroke="#1e8a2e" stroke-width="1.2"/><path d="M1001 535 h16" stroke="#f6f2e4" stroke-width="1.2"/><path d="M1001 535.9 h16" stroke="#c2c4d6" stroke-width="0.6"/><rect x="1003.4" y="546.8" width="10.4" height="13.4" fill="url(#gPp)" stroke="#222" stroke-width="1.1"/><rect x="996.5" y="569" width="25.5" height="22.6" rx="4" fill="url(#gPr)" stroke="#62646f" stroke-width="1.1"/><path d="M1003.6 572 V587 M1007.4 572 V587 M1011.2 572 V587 M1015 572 V587 M1001.4 574 H1017 M1001.4 577.8 H1017 M1001.4 581.6 H1017 M1001.4 585.2 H1017" stroke="#1414f0" stroke-width="1.25"/><rect x="996.5" y="594.6" width="25.5" height="23" rx="4" fill="url(#gPr)" stroke="#62646f" stroke-width="1.1"/><path d="M1001.6 598 V613.6 M1013.8 598 V613.6 M1006.6 613.6 L1013 598" stroke="#1414f0" stroke-width="1.2"/></svg>
<div class="a" id="canvasbg"></div>
<div class="a" id="canvas"></div>
<div class="a" style="left:961px;top:76px;width:1px;height:590px;background:#c0c0c4"></div>
<svg class="a" style="left:33px;top:76px" width="933" height="590" viewBox="33 76 933 590" shape-rendering="crispEdges"><rect x="53" y="89" width="885.5" height="1.3" fill="#000"/><rect x="48.8" y="93" width="1.3" height="553" fill="#000"/><path d="M56.5 84V89M66.5 84V89M75.5 84V89M85.5 84V89M95.5 77.5V89M104.5 84V89M114.5 84V89M123.5 84V89M133.5 84V89M142.5 77.5V89M152.5 84V89M162.5 84V89M171.5 84V89M181.5 84V89M190.5 77.5V89M200.5 84V89M209.5 84V89M219.5 84V89M228.5 84V89M238.5 77.5V89M248.5 84V89M257.5 84V89M267.5 84V89M276.5 84V89M286.5 77.5V89M295.5 84V89M305.5 84V89M315.5 84V89M324.5 84V89M334.5 77.5V89M343.5 84V89M353.5 84V89M362.5 84V89M372.5 84V89M381.5 77.5V89M391.5 84V89M401.5 84V89M410.5 84V89M420.5 84V89M429.5 77.5V89M439.5 84V89M448.5 84V89M458.5 84V89M468.5 84V89M477.5 77.5V89M487.5 84V89M496.5 84V89M506.5 84V89M515.5 84V89M525.5 77.5V89M534.5 84V89M544.5 84V89M554.5 84V89M563.5 84V89M573.5 77.5V89M582.5 84V89M592.5 84V89M601.5 84V89M611.5 84V89M621.5 77.5V89M630.5 84V89M640.5 84V89M649.5 84V89M659.5 84V89M668.5 77.5V89M678.5 84V89M687.5 84V89M697.5 84V89M707.5 84V89M716.5 77.5V89M726.5 84V89M735.5 84V89M745.5 84V89M754.5 84V89M764.5 77.5V89M773.5 84V89M783.5 84V89M793.5 84V89M802.5 84V89M812.5 77.5V89M821.5 84V89M831.5 84V89M840.5 84V89M850.5 84V89M860.5 77.5V89M869.5 84V89M879.5 84V89M888.5 84V89M898.5 84V89M907.5 77.5V89M917.5 84V89M926.5 84V89M936.5 84V89" stroke="#000" stroke-width="1.1" fill="none"/><path d="M45.5 638.5H49M45.5 628.5H49M43 619.5H49M45.5 609.5H49M45.5 600.5H49M45.5 590.5H49M45.5 581.5H49M38 571.5H49M45.5 562.5H49M45.5 552.5H49M45.5 542.5H49M45.5 533.5H49M43 523.5H49M45.5 514.5H49M45.5 504.5H49M45.5 495.5H49M45.5 485.5H49M38 475.5H49M45.5 466.5H49M45.5 456.5H49M45.5 447.5H49M45.5 437.5H49M43 428.5H49M45.5 418.5H49M45.5 409.5H49M45.5 399.5H49M45.5 389.5H49M38 380.5H49M45.5 370.5H49M45.5 361.5H49M45.5 351.5H49M45.5 342.5H49M43 332.5H49M45.5 322.5H49M45.5 313.5H49M45.5 303.5H49M45.5 294.5H49M38 284.5H49M45.5 275.5H49M45.5 265.5H49M45.5 256.5H49M45.5 246.5H49M43 236.5H49M45.5 227.5H49M45.5 217.5H49M45.5 208.5H49M45.5 198.5H49M38 189.5H49M45.5 179.5H49M45.5 169.5H49M45.5 160.5H49M45.5 150.5H49M43 141.5H49M45.5 131.5H49M45.5 122.5H49M45.5 112.5H49M45.5 103.5H49M38 93.5H49" stroke="#000" stroke-width="1.1" fill="none"/></svg>
<span class="t" style="left:144.5px;top:76.5px;font-size:7.5px;color:#000;line-height:12px;letter-spacing:-0.3px;-webkit-text-stroke:0.25px #000;">50</span>
<span class="t" style="left:240.12px;top:76.5px;font-size:7.5px;color:#000;line-height:12px;letter-spacing:-0.3px;-webkit-text-stroke:0.25px #000;">60</span>
<span class="t" style="left:335.74px;top:76.5px;font-size:7.5px;color:#000;line-height:12px;letter-spacing:-0.3px;-webkit-text-stroke:0.25px #000;">70</span>
<span class="t" style="left:431.36px;top:76.5px;font-size:7.5px;color:#000;line-height:12px;letter-spacing:-0.3px;-webkit-text-stroke:0.25px #000;">80</span>
<span class="t" style="left:526.98px;top:76.5px;font-size:7.5px;color:#000;line-height:12px;letter-spacing:-0.3px;-webkit-text-stroke:0.25px #000;">90</span>
<span class="t" style="left:622.6px;top:76.5px;font-size:7.5px;color:#000;line-height:12px;letter-spacing:-0.3px;-webkit-text-stroke:0.25px #000;">100</span>
<span class="t" style="left:718.22px;top:76.5px;font-size:7.5px;color:#000;line-height:12px;letter-spacing:-0.3px;-webkit-text-stroke:0.25px #000;">110</span>
<span class="t" style="left:813.84px;top:76.5px;font-size:7.5px;color:#000;line-height:12px;letter-spacing:-0.3px;-webkit-text-stroke:0.25px #000;">120</span>
<span class="t" style="left:909.46px;top:76.5px;font-size:7.5px;color:#000;line-height:12px;letter-spacing:-0.3px;-webkit-text-stroke:0.25px #000;">130</span>
<div class="a" style="left:53px;top:76px;width:6px;height:13px;overflow:hidden"><span class="t" style="left:-4.2px;top:0.5px;font-size:7.5px;line-height:12px;letter-spacing:-0.3px;color:#000;-webkit-text-stroke:0.25px #000">40</span></div>
<span class="t" style="left:38px;top:572px;font-size:7.5px;color:#000;line-height:10px;-webkit-text-stroke:0.25px #000;">1</span>
<span class="t" style="left:38px;top:579.5px;font-size:7.5px;color:#000;line-height:10px;-webkit-text-stroke:0.25px #000;">8</span>
<span class="t" style="left:38px;top:587px;font-size:7.5px;color:#000;line-height:10px;-webkit-text-stroke:0.25px #000;">0</span>
<span class="t" style="left:38px;top:476.38px;font-size:7.5px;color:#000;line-height:10px;-webkit-text-stroke:0.25px #000;">1</span>
<span class="t" style="left:38px;top:483.88px;font-size:7.5px;color:#000;line-height:10px;-webkit-text-stroke:0.25px #000;">9</span>
<span class="t" style="left:38px;top:491.38px;font-size:7.5px;color:#000;line-height:10px;-webkit-text-stroke:0.25px #000;">0</span>
<span class="t" style="left:38px;top:380.76px;font-size:7.5px;color:#000;line-height:10px;-webkit-text-stroke:0.25px #000;">2</span>
<span class="t" style="left:38px;top:388.26px;font-size:7.5px;color:#000;line-height:10px;-webkit-text-stroke:0.25px #000;">0</span>
<span class="t" style="left:38px;top:395.76px;font-size:7.5px;color:#000;line-height:10px;-webkit-text-stroke:0.25px #000;">0</span>
<span class="t" style="left:38px;top:285.14px;font-size:7.5px;color:#000;line-height:10px;-webkit-text-stroke:0.25px #000;">2</span>
<span class="t" style="left:38px;top:292.64px;font-size:7.5px;color:#000;line-height:10px;-webkit-text-stroke:0.25px #000;">1</span>
<span class="t" style="left:38px;top:300.14px;font-size:7.5px;color:#000;line-height:10px;-webkit-text-stroke:0.25px #000;">0</span>
<span class="t" style="left:38px;top:189.52px;font-size:7.5px;color:#000;line-height:10px;-webkit-text-stroke:0.25px #000;">2</span>
<span class="t" style="left:38px;top:197.02px;font-size:7.5px;color:#000;line-height:10px;-webkit-text-stroke:0.25px #000;">2</span>
<span class="t" style="left:38px;top:204.52px;font-size:7.5px;color:#000;line-height:10px;-webkit-text-stroke:0.25px #000;">0</span>
<span class="t" style="left:38px;top:93.9px;font-size:7.5px;color:#000;line-height:10px;-webkit-text-stroke:0.25px #000;">2</span>
<span class="t" style="left:38px;top:101.4px;font-size:7.5px;color:#000;line-height:10px;-webkit-text-stroke:0.25px #000;">3</span>
<span class="t" style="left:38px;top:108.9px;font-size:7.5px;color:#000;line-height:10px;-webkit-text-stroke:0.25px #000;">0</span>
<svg class="a" style="left:474px;top:83px" width="12" height="7" viewBox="0 0 12 7"><path d="M1.5 0.5 H10.5 L6 6.5 Z" fill="#000"/></svg>
<svg class="a" style="left:44px;top:188px" width="6" height="12" viewBox="0 0 6 12"><path d="M0.5 1 V11 L5.5 6 Z" fill="#000"/></svg>
<svg class="a" style="left:38px;top:76.6px" width="9" height="10" viewBox="0 0 11 12">
<path d="M3 5.5 V3.6 Q3 1.4 5.5 1.4 Q8 1.4 8 3.6 V5.5" fill="none" stroke="#6b5a2a" stroke-width="1.3"/>
<rect x="1.4" y="5" width="8.2" height="5.6" rx="0.8" fill="#f0b932" stroke="#7a5a12" stroke-width="0.9"/>
<rect x="2.4" y="5.9" width="6.2" height="1.3" fill="#fbe08a"/>
<rect x="4.9" y="7.4" width="1.2" height="2" fill="#5a4210"/>
</svg>
<div class="a" style="left:940px;top:76px;width:17px;height:13.5px;border:1px solid #7e7e86;border-radius:3px;background:#e4e4e8"></div>
<svg class="a" style="left:941px;top:76px" width="16" height="14" viewBox="0 0 16 14"><circle cx="6.6" cy="6" r="3.6" fill="#f4f4f4" stroke="#777" stroke-width="1.1"/><path d="M9.2 8.6 L12.6 11.6" stroke="#666" stroke-width="1.8" stroke-linecap="round"/><path d="M5 6 h3.2 M6.6 4.4 v3.2" stroke="#999" stroke-width="0.7"/></svg>
<div class="a" style="left:941px;top:91px;width:15px;height:558px;background:#f0f0f0"></div>
<div class="a" style="left:945px;top:96px;border:4.5px solid transparent;border-bottom:5px solid #222;border-top:0"></div>
<div class="a" style="left:945px;top:637px;border:4.5px solid transparent;border-top:5px solid #222;border-bottom:0"></div>
<div class="a" style="left:941.5px;top:323px;width:14.5px;height:29px;border:1px solid #8c8c8c;border-radius:2px;background:linear-gradient(90deg,#f6f6f6 0,#e6e6e6 50%,#cfcfcf 100%)">
<div class="a" style="left:3px;top:9px;width:7px;height:1.2px;background:#555;box-shadow:0 3px 0 #555,0 6px 0 #555,0 1px 0 #fff,0 4px 0 #fff,0 7px 0 #fff"></div></div>
<div class="a" style="left:50px;top:649px;width:891px;height:15px;background:#f0f0f0"></div>
<div class="a" style="left:51px;top:649px;width:17px;height:15px;background:#ececec"></div>
<div class="a" style="left:56.5px;top:651.5px;border:4.5px solid transparent;border-right:5px solid #222;border-left:0"></div>
<div class="a" style="left:930.5px;top:651.5px;border:4.5px solid transparent;border-left:5px solid #222;border-right:0"></div>
<div class="a" style="left:411px;top:649.5px;width:121px;height:14px;border:1px solid #8c8c8c;border-radius:2px;background:linear-gradient(180deg,#f6f6f6 0,#e6e6e6 50%,#cbcbcb 100%)">
<div class="a" style="left:56px;top:3px;width:1.3px;height:7px;background:#444;box-shadow:3px 0 0 #444,6px 0 0 #444,1px 0 0 #fff,4px 0 0 #fff,7px 0 0 #fff"></div></div>
<svg class="a" style="left:941px;top:649px" width="14" height="15" viewBox="0 0 14 15"><path d="M2.5 2.5 L11.5 7.5 L2.5 12.5 Z" fill="#c8c8c8"/><g stroke-width="0.9"><path d="M3 3.4 L5.6 4.8 M3 5.6 L8 7.6" stroke="#c33"/><path d="M3 7.6 L9.6 7.6 M3 9.6 L7 8.6" stroke="#3a3"/><path d="M3 11.6 L9.6 8" stroke="#55c"/></g><path d="M2.5 2.5 L11.5 7.5 L2.5 12.5 Z" fill="none" stroke="#888" stroke-width="0.6"/></svg>
<svg class="a" style="left:50px;top:91px" width="891" height="558" viewBox="50 91 891 558"><defs><linearGradient id="gY" gradientUnits="userSpaceOnUse" x1="483.5" y1="194.5" x2="361.5" y2="452.5"><stop offset="0" stop-color="#fbde0a"/><stop offset="0.55" stop-color="#ffcc00"/><stop offset="1" stop-color="#f9e105"/></linearGradient></defs><path d="M517.4 192.6L517.4 192.6C515.6 191.7 510.1 189.2 506.5 187.3C502.9 185.4 499.4 183.3 495.9 181.3C492.4 179.2 488.9 177.0 485.4 175.0C481.9 173.0 478.3 170.9 474.7 169.1C471.1 167.3 467.5 165.5 463.7 164.1C460.0 162.7 456.1 161.5 452.2 160.6C448.3 159.7 444.2 159.0 440.2 158.7C436.2 158.4 432.1 158.3 428.0 158.6C423.9 158.8 419.8 159.3 415.9 160.2C411.9 161.0 407.9 162.1 404.1 163.6C400.3 165.0 396.6 166.7 393.0 168.7C389.5 170.6 386.1 172.8 382.8 175.1C379.6 177.4 376.5 180.0 373.5 182.7C370.5 185.4 367.7 188.2 365.0 191.2C362.3 194.2 359.7 197.3 357.3 200.6C354.8 203.8 352.5 207.2 350.3 210.6C348.1 214.0 346.0 217.6 343.9 221.2C341.9 224.7 340.0 228.4 338.2 232.1C336.4 235.8 334.7 239.5 333.1 243.2C331.4 247.0 329.9 250.7 328.4 254.5C326.9 258.2 324.9 263.7 324.2 265.6L324.2 265.6C326.0 271.3 331.1 297.7 335.0 300.0C338.9 302.3 344.4 284.7 347.8 279.7C351.1 274.6 352.5 272.8 355.1 269.5C357.6 266.2 360.2 262.9 363.0 259.8C365.7 256.6 368.6 253.5 371.5 250.6C374.4 247.6 377.5 244.7 380.6 241.9C383.7 239.1 386.9 236.5 390.2 233.9C393.5 231.3 396.9 228.8 400.3 226.5C403.8 224.1 407.3 221.9 410.9 219.7C414.4 217.6 418.1 215.6 421.8 213.7C425.5 211.8 429.3 210.1 433.1 208.4C436.9 206.8 436.7 205.8 444.7 203.9C452.7 202.0 468.9 198.6 481.0 197.0C493.1 195.4 511.3 194.9 517.4 194.5Z" fill="#bce564" /><path d="M517.4 192.8L517.4 192.8C515.4 192.0 509.3 189.6 505.3 188.2C501.2 186.9 497.1 185.8 493.0 184.9C488.9 184.0 484.8 183.4 480.6 182.9C476.5 182.3 472.4 182.0 468.3 181.9C464.1 181.8 460.0 181.9 455.9 182.1C451.8 182.4 447.7 182.8 443.7 183.4C439.6 184.0 435.6 184.7 431.6 185.7C427.6 186.6 423.6 187.7 419.7 188.9C415.8 190.2 411.9 191.6 408.0 193.1C404.2 194.7 400.4 196.4 396.7 198.2C393.0 200.1 389.4 202.1 385.8 204.2C382.2 206.3 378.7 208.5 375.3 210.9C371.8 213.3 368.5 215.8 365.2 218.4C362.0 221.0 358.8 223.8 355.7 226.6C352.6 229.5 349.7 232.4 346.8 235.5C343.9 238.5 341.2 241.7 338.5 245.0C335.9 248.2 333.4 251.6 331.0 255.0C328.6 258.5 325.3 263.8 324.2 265.6L324.2 265.6C323.5 267.5 321.0 273.1 319.8 276.9C318.6 280.7 317.6 284.6 316.8 288.6C316.0 292.5 315.5 296.5 315.0 300.5C314.6 304.5 314.4 308.6 314.3 312.6C314.3 316.7 314.3 320.8 314.5 324.8C314.7 328.9 315.0 333.0 315.4 337.0C315.8 341.1 316.3 345.1 316.9 349.1C317.5 353.1 318.4 359.0 318.8 361.0L318.8 361.0C323.4 362.9 341.4 372.4 346.4 372.5C351.4 372.6 347.8 365.5 348.5 361.7C349.3 357.8 350.0 353.5 350.9 349.5C351.8 345.5 352.8 341.5 353.9 337.5C355.1 333.6 356.3 329.6 357.6 325.7C358.9 321.9 360.3 318.0 361.9 314.2C363.4 310.4 365.0 306.6 366.7 302.9C368.5 299.2 370.3 295.5 372.2 291.9C374.1 288.3 376.2 284.7 378.3 281.2C380.4 277.7 382.6 274.3 384.9 270.9C387.2 267.5 389.6 264.2 392.1 261.0C394.6 257.8 397.2 254.6 399.9 251.5C402.6 248.5 405.3 245.5 408.2 242.6C411.1 239.7 414.0 236.8 417.1 234.1C420.1 231.4 423.2 228.7 426.5 226.2C429.7 223.7 433.0 221.2 436.4 218.9C439.7 216.5 438.8 216.1 446.8 212.2C454.8 208.3 472.7 198.4 484.5 195.5C496.3 192.6 511.9 194.9 517.4 194.8Z" fill="#62d29c" /><path d="M481.0 195.6L481.0 195.6C479.0 195.9 472.8 196.7 468.7 197.5C464.6 198.3 460.6 199.2 456.6 200.3C452.6 201.4 448.6 202.6 444.7 203.9C440.8 205.3 436.9 206.8 433.1 208.4C429.3 210.1 425.5 211.8 421.8 213.7C418.1 215.6 414.4 217.6 410.9 219.7C407.3 221.9 403.8 224.1 400.3 226.5C396.9 228.8 393.5 231.3 390.2 233.9C386.9 236.5 383.7 239.1 380.6 241.9C377.5 244.7 374.4 247.6 371.5 250.6C368.6 253.5 365.7 256.6 363.0 259.8C360.2 262.9 357.6 266.2 355.1 269.5C352.5 272.8 350.1 276.2 347.8 279.7C345.5 283.1 343.3 286.7 341.2 290.3C339.2 293.9 337.2 297.6 335.4 301.3C333.6 305.0 331.9 308.8 330.3 312.7C328.8 316.5 327.4 320.4 326.1 324.4C324.8 328.3 323.7 332.3 322.7 336.4C321.8 340.4 320.9 344.5 320.3 348.6C319.6 352.7 319.0 358.9 318.8 361.0L318.8 361.0C319.0 363.2 319.5 369.7 320.1 374.0C320.7 378.4 321.4 382.7 322.3 386.9C323.1 391.2 324.1 395.4 325.2 399.6C326.3 403.8 327.5 408.0 328.8 412.2C330.1 416.3 331.6 420.4 333.1 424.5C334.6 428.6 336.2 432.7 337.9 436.7C339.6 440.7 341.4 444.7 343.3 448.7C345.1 452.6 347.1 456.6 349.1 460.4C351.1 464.3 353.1 468.2 355.2 472.0C357.3 475.8 360.6 481.4 361.7 483.3L361.7 483.3C366.6 482.7 386.6 481.0 391.2 479.7C395.8 478.4 390.4 478.0 389.5 475.4C388.6 472.7 387.0 467.6 385.9 463.7C384.8 459.8 383.8 455.9 382.9 452.0C382.0 448.0 381.2 444.1 380.5 440.1C379.8 436.1 379.3 432.1 378.8 428.1C378.4 424.1 378.0 420.1 377.8 416.1C377.5 412.1 377.4 408.1 377.4 404.1C377.4 400.1 377.5 396.0 377.7 392.1C377.9 388.1 378.3 384.1 378.7 380.1C379.2 376.2 379.7 372.2 380.4 368.3C381.1 364.4 381.8 360.5 382.7 356.6C383.6 352.8 384.7 348.9 385.8 345.1C386.9 341.3 388.2 337.5 389.6 333.8C390.9 330.1 392.4 326.4 394.0 322.8C395.6 319.1 397.4 315.6 399.2 312.0C401.0 308.5 403.0 305.0 405.1 301.6C407.2 298.2 409.4 294.8 411.7 291.5C414.0 288.3 416.4 285.0 418.9 281.9C421.4 278.7 424.0 275.7 426.7 272.7C429.4 269.7 432.2 266.8 435.1 263.9C438.0 261.1 441.0 258.4 444.1 255.7C447.1 253.1 450.3 250.6 453.5 248.1C456.7 245.7 458.8 246.6 463.4 241.1C468.0 235.6 478.1 222.6 481.0 215.0C483.9 207.4 481.0 198.8 481.0 195.6Z" fill="#13978a" /><path d="M563.8 210.0L563.8 210.0C561.8 208.9 555.9 205.1 551.8 203.1C547.7 201.1 543.4 199.6 539.0 198.2C534.7 196.9 530.2 195.9 525.7 195.1C521.2 194.3 516.6 193.8 512.0 193.4C507.4 193.1 502.8 193.0 498.2 193.0C493.6 193.0 486.8 193.3 484.5 193.4L481.0 196.2C479.0 197.0 473.0 199.1 469.1 200.8C465.2 202.5 461.4 204.2 457.7 206.1C454.0 208.0 450.3 210.1 446.8 212.2C443.2 214.3 439.7 216.5 436.4 218.9C433.0 221.2 429.7 223.7 426.5 226.2C423.2 228.7 420.1 231.4 417.1 234.1C414.0 236.8 411.1 239.7 408.2 242.6C405.3 245.5 402.6 248.5 399.9 251.5C397.2 254.6 394.6 257.8 392.1 261.0C389.6 264.2 387.2 267.5 384.9 270.9C382.6 274.3 380.4 277.7 378.3 281.2C376.2 284.7 374.1 288.3 372.2 291.9C370.3 295.5 368.5 299.2 366.7 302.9C365.0 306.6 363.4 310.4 361.9 314.2C360.3 318.0 358.9 321.9 357.6 325.7C356.3 329.6 355.1 333.6 353.9 337.5C352.8 341.5 351.8 345.5 350.9 349.5C350.0 353.5 349.2 357.6 348.5 361.7C347.8 365.7 347.3 369.8 346.8 373.9C346.3 378.0 345.9 382.1 345.7 386.2C345.4 390.3 345.3 394.5 345.3 398.6C345.2 402.7 345.3 406.8 345.5 411.0C345.7 415.1 346.0 419.2 346.4 423.3C346.9 427.4 347.4 431.5 348.1 435.6C348.7 439.7 349.5 443.7 350.4 447.8C351.3 451.8 352.3 455.8 353.4 459.8C354.6 463.8 355.8 467.7 357.2 471.7C358.6 475.6 361.0 481.4 361.7 483.3L361.7 483.3C362.6 485.1 365.1 490.6 367.0 494.1C368.8 497.7 370.8 501.2 373.0 504.6C375.1 508.0 377.3 511.4 379.7 514.7C382.0 518.0 384.5 521.2 387.1 524.3C389.6 527.4 392.3 530.5 395.1 533.5C397.8 536.4 400.7 539.3 403.6 542.0C406.6 544.8 409.6 547.5 412.8 550.0C415.9 552.6 419.1 555.0 422.4 557.3C425.7 559.6 429.1 561.9 432.5 563.9C435.9 566.0 441.2 568.8 443.0 569.8L443.0 569.8C447.5 569.2 465.9 567.4 470.0 566.0C474.1 564.6 469.2 563.6 467.7 561.2C466.1 558.8 462.9 554.9 460.7 551.6C458.5 548.3 456.3 545.0 454.2 541.6C452.2 538.2 450.2 534.7 448.3 531.2C446.4 527.7 444.5 524.1 442.8 520.5C441.0 516.9 439.3 513.2 437.7 509.5C436.0 505.8 434.4 502.1 432.9 498.3C431.4 494.5 429.9 490.7 428.5 486.8C427.1 483.0 425.7 479.1 424.5 475.1C423.2 471.2 422.0 467.3 420.8 463.3C419.7 459.3 418.6 455.4 417.6 451.3C416.7 447.3 415.8 443.3 415.0 439.3C414.2 435.3 413.5 431.2 412.9 427.2C412.3 423.1 411.8 419.1 411.5 415.0C411.1 411.0 410.9 406.9 410.7 402.9C410.6 398.9 410.6 394.8 410.7 390.8C410.8 386.8 411.1 382.8 411.5 378.8C411.9 374.8 412.4 370.9 413.1 366.9C413.8 363.0 414.6 359.0 415.5 355.2C416.5 351.3 417.6 347.4 418.8 343.6C420.0 339.8 421.3 336.0 422.7 332.3C424.2 328.6 425.8 324.9 427.5 321.2C429.2 317.6 431.0 314.0 432.9 310.5C434.8 307.0 436.8 303.5 439.0 300.2C441.1 296.8 443.4 293.4 445.7 290.2C448.1 286.9 450.6 283.8 453.1 280.7C455.7 277.6 458.3 274.5 461.1 271.6C463.9 268.7 466.7 265.8 469.6 263.1C472.6 260.4 475.6 257.7 478.7 255.1C481.9 252.6 485.1 250.1 488.3 247.8C491.6 245.4 495.0 243.2 498.4 241.1C501.9 239.0 505.4 237.0 509.0 235.1C512.6 233.2 516.2 231.4 520.0 229.8C523.7 228.1 524.7 228.0 531.3 225.3C538.0 222.5 554.6 216.0 560.0 213.5C565.4 211.0 563.2 210.6 563.8 210.0Z" fill="url(#gY)" /><path d="M566.0 211.4L566.0 211.4C564.0 211.4 557.9 211.1 553.9 211.2C549.8 211.3 545.8 211.6 541.8 212.0C537.8 212.4 533.8 213.0 529.9 213.7C525.9 214.4 522.0 215.3 518.1 216.3C514.2 217.3 510.4 218.5 506.6 219.7C502.8 221.0 499.0 222.4 495.3 224.0C491.6 225.5 487.9 227.2 484.3 229.0C480.7 230.7 477.2 232.7 473.7 234.7C470.2 236.7 466.7 238.8 463.4 241.1C460.0 243.3 456.7 245.7 453.5 248.1C450.3 250.6 447.1 253.1 444.1 255.7C441.0 258.4 438.0 261.1 435.1 263.9C432.2 266.8 429.4 269.7 426.7 272.7C424.0 275.7 421.4 278.7 418.9 281.9C416.4 285.0 414.0 288.3 411.7 291.5C409.4 294.8 407.2 298.2 405.1 301.6C403.0 305.0 401.0 308.5 399.2 312.0C397.4 315.6 395.6 319.1 394.0 322.8C392.4 326.4 390.9 330.1 389.6 333.8C388.2 337.5 386.9 341.3 385.8 345.1C384.7 348.9 383.6 352.8 382.7 356.6C381.8 360.5 381.1 364.4 380.4 368.3C379.7 372.2 379.2 376.2 378.7 380.1C378.3 384.1 377.9 388.1 377.7 392.1C377.5 396.0 377.4 400.1 377.4 404.1C377.4 408.1 377.5 412.1 377.8 416.1C378.0 420.1 378.4 424.1 378.8 428.1C379.3 432.1 379.8 436.1 380.5 440.1C381.2 444.1 382.0 448.0 382.9 452.0C383.8 455.9 384.8 459.8 385.9 463.7C387.0 467.6 388.2 471.5 389.5 475.4C390.8 479.2 392.2 483.1 393.6 486.9C395.1 490.7 396.7 494.4 398.3 498.1C400.0 501.9 401.7 505.6 403.5 509.2C405.3 512.9 407.2 516.5 409.2 520.1C411.1 523.6 413.2 527.2 415.2 530.6C417.3 534.1 419.5 537.5 421.7 540.9C423.9 544.3 426.2 547.6 428.5 550.9C430.8 554.2 433.2 557.4 435.6 560.5C438.0 563.7 441.8 568.3 443.0 569.8L443.0 569.8C444.9 570.9 450.4 574.1 454.2 576.2C458.0 578.2 461.8 580.2 465.7 582.0C469.6 583.8 473.5 585.5 477.5 587.1C481.5 588.7 485.5 590.2 489.6 591.6C493.6 593.0 499.8 594.7 501.9 595.3L501.9 595.3C504.9 594.8 522.8 600.4 520.0 592.0C517.2 583.6 494.7 560.3 485.0 545.0C475.3 529.7 468.2 515.8 462.0 500.0C455.8 484.2 451.7 466.7 448.0 450.0C444.3 433.3 441.7 414.7 440.0 400.0C438.3 385.3 436.8 374.5 438.0 362.0C439.2 349.5 443.4 336.8 447.0 325.0C450.6 313.2 456.1 298.5 459.9 291.0C463.6 283.5 466.5 283.6 469.7 280.0C472.9 276.4 475.9 273.0 479.3 269.6C482.6 266.2 486.1 262.9 489.8 259.6C493.5 256.3 497.6 252.8 501.6 249.8C505.5 246.7 509.4 243.8 513.2 241.0C517.1 238.2 521.0 235.6 525.0 233.2C528.9 230.8 533.2 228.4 536.7 226.6C540.1 224.8 542.5 223.9 545.5 222.6C548.6 221.3 552.7 219.9 555.2 218.8C557.7 217.7 558.5 217.0 560.3 215.8C562.1 214.5 565.0 212.1 566.0 211.4Z" fill="#ff922b" /><path d="M555.2 218.7L555.2 218.7C553.2 219.2 547.1 220.5 543.1 221.6C539.1 222.6 535.2 223.9 531.3 225.3C527.5 226.6 523.7 228.1 520.0 229.8C516.2 231.4 512.6 233.2 509.0 235.1C505.4 237.0 501.9 239.0 498.4 241.1C495.0 243.2 491.6 245.4 488.3 247.8C485.1 250.1 481.9 252.6 478.7 255.1C475.6 257.7 472.6 260.4 469.6 263.1C466.7 265.8 463.9 268.7 461.1 271.6C458.3 274.5 455.7 277.6 453.1 280.7C450.6 283.8 448.1 286.9 445.7 290.2C443.4 293.4 441.1 296.8 439.0 300.2C436.8 303.5 434.8 307.0 432.9 310.5C431.0 314.0 429.2 317.6 427.5 321.2C425.8 324.9 424.2 328.6 422.7 332.3C421.3 336.0 420.0 339.8 418.8 343.6C417.6 347.4 416.5 351.3 415.5 355.2C414.6 359.0 413.8 363.0 413.1 366.9C412.4 370.9 411.9 374.8 411.5 378.8C411.1 382.8 410.8 386.8 410.7 390.8C410.6 394.8 410.6 398.9 410.7 402.9C410.9 406.9 411.1 411.0 411.5 415.0C411.8 419.1 412.3 423.1 412.9 427.2C413.5 431.2 414.2 435.3 415.0 439.3C415.8 443.3 416.7 447.3 417.6 451.3C418.6 455.4 419.7 459.3 420.8 463.3C422.0 467.3 423.2 471.2 424.5 475.1C425.7 479.1 427.1 483.0 428.5 486.8C429.9 490.7 431.4 494.5 432.9 498.3C434.4 502.1 436.0 505.8 437.7 509.5C439.3 513.2 441.0 516.9 442.8 520.5C444.5 524.1 446.4 527.7 448.3 531.2C450.2 534.7 452.2 538.2 454.2 541.6C456.3 545.0 458.5 548.3 460.7 551.6C462.9 554.9 465.3 558.1 467.7 561.2C470.1 564.4 472.6 567.4 475.3 570.4C477.9 573.4 480.6 576.4 483.5 579.2C486.3 582.1 489.3 584.8 492.3 587.5C495.4 590.2 500.3 594.0 501.9 595.3L501.9 595.3C504.0 595.9 510.4 598.0 514.7 599.0C519.0 600.0 523.4 600.8 527.8 601.5C532.1 602.2 536.5 602.7 540.9 603.0C545.3 603.4 549.7 603.6 554.1 603.8C558.6 603.9 563.0 603.9 567.5 603.8C571.9 603.8 576.3 603.7 580.8 603.5C585.2 603.3 589.7 603.1 594.1 602.9C598.6 602.7 603.0 602.4 607.4 602.2C611.8 602.0 618.4 601.7 620.6 601.6L620.6 601.6C622.2 601.0 633.1 599.3 630.0 598.0C626.9 596.7 608.8 595.4 602.3 594.1C595.7 592.8 594.5 591.6 590.6 590.1C586.8 588.7 583.0 587.1 579.3 585.4C575.6 583.8 572.0 582.0 568.4 580.1C564.9 578.2 561.4 576.1 557.9 574.0C554.5 571.9 551.1 569.7 547.8 567.3C544.5 565.0 541.3 562.6 538.1 560.1C535.0 557.6 531.9 554.9 528.9 552.2C525.9 549.5 523.0 546.7 520.1 543.9C517.3 541.0 514.5 538.0 511.8 535.0C509.1 532.0 506.5 528.8 504.0 525.7C501.4 522.5 499.0 519.2 496.6 515.9C494.3 512.6 492.0 509.2 489.8 505.8C487.6 502.3 485.5 498.8 483.5 495.3C481.5 491.7 479.6 488.1 477.8 484.4C476.0 480.8 474.2 477.0 472.6 473.3C471.0 469.5 469.4 465.7 468.0 461.9C466.5 458.1 465.2 454.2 464.0 450.3C462.7 446.4 461.6 442.5 460.5 438.5C459.5 434.6 458.6 430.6 457.7 426.6C456.9 422.6 456.2 418.6 455.6 414.5C455.0 410.5 454.5 406.4 454.1 402.4C453.7 398.3 453.4 394.3 453.2 390.2C453.1 386.1 453.0 382.1 453.1 378.0C453.1 373.9 453.3 371.3 453.6 365.8C453.9 360.3 454.8 348.5 455.0 345.0L451.0 343.4C451.7 341.4 453.5 335.1 454.9 331.1C456.4 327.1 458.0 323.1 459.7 319.2C461.5 315.4 463.4 311.5 465.4 307.8C467.4 304.1 469.6 300.4 471.8 296.8C474.1 293.2 476.5 289.7 479.0 286.2C481.5 282.8 484.1 279.4 486.8 276.1C489.6 272.8 492.4 269.6 495.3 266.5C498.2 263.3 501.2 260.3 504.3 257.3C507.3 254.3 510.5 251.4 513.7 248.6C516.9 245.8 520.2 243.0 523.6 240.4C527.0 237.7 530.4 235.1 533.9 232.7C537.3 230.2 540.8 227.7 544.4 225.4C548.0 223.1 553.4 219.8 555.2 218.7Z" fill="#e4354b" /><path d="M450.8 343.6L450.8 343.6C450.5 345.6 449.4 351.6 448.8 355.7C448.3 359.7 447.9 363.7 447.6 367.8C447.3 371.8 447.1 375.9 447.1 380.0C447.0 384.1 447.1 388.1 447.2 392.2C447.4 396.3 447.7 400.3 448.1 404.4C448.5 408.4 449.0 412.5 449.6 416.5C450.2 420.6 450.9 424.6 451.7 428.6C452.6 432.6 453.5 436.6 454.5 440.5C455.6 444.5 456.7 448.4 458.0 452.3C459.2 456.2 460.5 460.1 462.0 463.9C463.4 467.7 465.0 471.5 466.6 475.3C468.2 479.0 470.0 482.8 471.8 486.4C473.6 490.1 475.5 493.7 477.5 497.3C479.5 500.8 481.6 504.3 483.8 507.8C486.0 511.2 488.3 514.6 490.6 517.9C493.0 521.2 495.4 524.5 498.0 527.7C500.5 530.8 503.1 534.0 505.8 537.0C508.5 540.0 511.3 543.0 514.1 545.9C517.0 548.7 519.9 551.5 522.9 554.2C525.9 556.9 529.0 559.6 532.1 562.1C535.3 564.6 538.5 567.0 541.8 569.3C545.1 571.7 548.5 573.9 551.9 576.0C555.4 578.1 558.9 580.2 562.4 582.1C566.0 584.0 569.6 585.8 573.3 587.4C577.0 589.1 580.8 590.7 584.6 592.1C588.5 593.6 592.3 594.9 596.3 596.1C600.2 597.2 604.2 598.3 608.3 599.2C612.3 600.2 618.5 601.2 620.6 601.6L620.6 601.6C622.7 601.7 629.1 602.2 633.4 602.4C637.7 602.6 642.0 602.7 646.3 602.8C650.5 602.9 654.8 602.9 659.1 602.9C663.4 602.8 667.7 602.7 672.0 602.5C676.2 602.3 680.5 602.1 684.8 601.7C689.1 601.4 693.3 601.0 697.6 600.5C701.8 600.0 706.1 599.4 710.3 598.7C714.5 598.0 718.7 597.2 722.9 596.4C727.1 595.5 731.3 594.6 735.4 593.5C739.6 592.4 745.7 590.6 747.8 590.0L747.8 590.0C739.8 587.5 721.3 585.0 700.0 575.0C678.7 565.0 646.7 550.8 620.0 530.0C593.3 509.2 563.3 475.8 540.0 450.0C516.7 424.2 494.9 392.7 480.0 375.0C465.1 357.3 455.7 348.8 450.8 343.6Z" fill="#22206f" /><path d="M637.8 488.3L637.8 488.3C639.8 487.9 645.7 486.5 649.6 485.5C653.6 484.5 657.5 483.4 661.4 482.2C665.3 481.0 669.2 479.8 673.0 478.4C676.9 477.1 680.7 475.6 684.5 474.1C688.3 472.6 692.1 471.1 695.9 469.4C699.6 467.8 703.3 466.1 707.0 464.3C710.7 462.5 714.4 460.6 718.0 458.7C721.6 456.8 725.2 454.7 728.7 452.7C732.3 450.6 735.8 448.5 739.3 446.3C742.7 444.1 746.2 441.8 749.5 439.5C752.9 437.2 756.2 434.8 759.5 432.4C762.8 429.9 766.1 427.4 769.2 424.9C772.4 422.3 775.6 419.7 778.6 417.0C781.7 414.4 784.8 411.6 787.7 408.9C790.7 406.1 793.6 403.3 796.5 400.4C799.3 397.5 802.1 394.6 804.8 391.6C807.6 388.6 810.2 385.6 812.8 382.5C815.4 379.5 819.1 374.8 820.4 373.2L820.4 373.2C820.6 375.1 821.6 380.9 821.7 384.8C821.8 388.8 821.5 392.8 821.0 396.7C820.6 400.7 819.8 404.7 818.9 408.6C818.0 412.5 816.9 416.4 815.7 420.2C814.5 424.0 813.1 427.7 811.6 431.5C810.1 435.2 808.5 438.9 806.8 442.5C805.1 446.2 803.2 449.8 801.3 453.4C799.5 457.0 797.5 460.5 795.5 464.1C793.5 467.6 791.4 471.1 789.3 474.6C787.2 478.1 785.1 481.6 782.9 485.0C780.8 488.5 778.6 491.9 776.4 495.3C774.2 498.7 772.0 502.1 769.7 505.4C767.5 508.8 765.2 512.1 762.8 515.3C760.4 518.6 758.0 521.8 755.5 524.9C753.0 528.0 750.5 531.1 747.8 534.1C745.2 537.2 742.5 540.1 739.7 543.0C736.9 545.8 734.0 548.6 731.1 551.3C728.1 554.0 725.0 556.6 721.8 559.2C718.6 561.7 713.6 565.2 711.9 566.4L711.9 566.4L709.0 562.8C707.4 561.7 702.4 558.2 699.2 555.7C696.0 553.2 692.9 550.6 689.9 547.8C686.9 545.1 684.0 542.2 681.1 539.2C678.3 536.3 675.6 533.2 672.9 530.1C670.2 527.0 667.7 523.9 665.2 520.7C662.7 517.4 660.3 514.2 658.0 510.9C655.7 507.6 653.5 504.3 651.3 500.9C649.2 497.5 647.1 494.1 645.0 490.7C643.0 487.3 640.0 482.0 639.0 480.3Z" fill="#173a94" /><path d="M637.8 488.3L637.8 488.3C639.8 487.9 645.7 486.5 649.6 485.5C653.6 484.5 657.5 483.4 661.4 482.2C665.3 481.0 669.2 479.8 673.0 478.4C676.9 477.1 680.7 475.6 684.5 474.1C688.3 472.6 692.1 471.1 695.9 469.4C699.6 467.8 703.3 466.1 707.0 464.3C710.7 462.5 714.4 460.6 718.0 458.7C721.6 456.8 725.2 454.7 728.7 452.7C732.3 450.6 735.8 448.5 739.3 446.3C742.7 444.1 746.2 441.8 749.5 439.5C752.9 437.2 756.2 434.8 759.5 432.4C762.8 429.9 766.1 427.4 769.2 424.9C772.4 422.3 775.6 419.7 778.6 417.0C781.7 414.4 784.8 411.6 787.7 408.9C790.7 406.1 793.6 403.3 796.5 400.4C799.3 397.5 802.1 394.6 804.8 391.6C807.6 388.6 810.2 385.6 812.8 382.5C815.4 379.5 819.1 374.8 820.4 373.2L820.4 373.2C819.4 375.1 816.6 380.9 814.6 384.6C812.6 388.4 810.4 392.0 808.1 395.6C805.9 399.2 803.5 402.7 801.1 406.1C798.6 409.5 796.0 412.9 793.4 416.2C790.8 419.4 788.0 422.7 785.2 425.8C782.4 429.0 779.5 432.0 776.6 435.1C773.6 438.1 770.6 441.0 767.5 443.9C764.4 446.8 761.3 449.7 758.1 452.5C754.9 455.3 751.6 458.0 748.3 460.7C745.0 463.4 741.6 466.0 738.2 468.6C734.9 471.2 731.4 473.8 728.0 476.3C724.5 478.8 721.0 481.3 717.5 483.7C714.0 486.2 710.4 488.5 706.9 490.9C703.4 493.3 699.8 495.6 696.2 497.9C692.7 500.2 689.1 502.5 685.5 504.7C681.9 507.0 676.6 510.3 674.8 511.4L674.8 511.4C673.2 510.7 668.1 508.7 665.1 506.9C662.0 505.1 659.3 502.9 656.5 500.6C653.8 498.4 651.2 495.8 648.6 493.4C646.0 491.0 642.2 487.3 640.9 486.1Z" fill="#3e9fd3" /><path d="M674.8 511.4L674.8 511.4C676.6 510.3 681.9 507.0 685.5 504.7C689.1 502.5 692.7 500.2 696.2 497.9C699.8 495.6 703.4 493.3 706.9 490.9C710.4 488.5 714.0 486.2 717.5 483.7C721.0 481.3 724.5 478.8 728.0 476.3C731.4 473.8 734.9 471.2 738.2 468.6C741.6 466.0 745.0 463.4 748.3 460.7C751.6 458.0 754.9 455.3 758.1 452.5C761.3 449.7 764.4 446.8 767.5 443.9C770.6 441.0 773.6 438.1 776.6 435.1C779.5 432.0 782.4 429.0 785.2 425.8C788.0 422.7 790.8 419.4 793.4 416.2C796.0 412.9 798.6 409.5 801.1 406.1C803.5 402.7 805.9 399.2 808.1 395.6C810.4 392.0 812.6 388.4 814.6 384.6C816.6 380.9 819.4 375.1 820.4 373.2L820.4 373.2C820.6 374.0 821.3 377.2 821.5 378.0L821.5 378.0C821.1 380.1 820.2 386.5 819.3 390.6C818.4 394.8 817.3 398.8 816.0 402.8C814.7 406.8 813.3 410.8 811.7 414.6C810.1 418.5 808.4 422.3 806.5 426.1C804.7 429.8 802.7 433.5 800.6 437.2C798.6 440.9 796.4 444.5 794.1 448.0C791.9 451.6 789.5 455.2 787.1 458.7C784.7 462.2 782.3 465.6 779.8 469.1C777.3 472.5 774.8 475.9 772.2 479.3C769.7 482.7 767.1 486.1 764.5 489.5C762.0 492.9 759.4 496.2 756.9 499.6C754.4 502.9 750.6 507.9 749.4 509.6L749.4 509.6C747.4 510.3 741.4 512.5 737.3 513.6C733.2 514.8 729.0 515.9 724.8 516.6C720.6 517.4 716.3 518.0 712.1 518.2C707.9 518.4 703.6 518.5 699.4 518.1C695.2 517.7 691.0 517.0 686.9 515.9C682.8 514.8 676.8 512.2 674.8 511.4Z" fill="#327bca" /><path d="M749.4 509.6L749.4 509.6C750.6 507.9 754.4 502.9 756.9 499.6C759.4 496.2 762.0 492.9 764.5 489.5C767.1 486.1 769.7 482.7 772.2 479.3C774.8 475.9 777.3 472.5 779.8 469.1C782.3 465.6 784.7 462.2 787.1 458.7C789.5 455.2 791.9 451.6 794.1 448.0C796.4 444.5 798.6 440.9 800.6 437.2C802.7 433.5 804.7 429.8 806.5 426.1C808.4 422.3 810.1 418.5 811.7 414.6C813.3 410.8 814.7 406.8 816.0 402.8C817.3 398.8 818.4 394.8 819.3 390.6C820.2 386.5 821.1 380.1 821.5 378.0L821.5 378.0C821.6 377.7 822.1 376.3 822.2 376.0L821.7 384.8C821.6 386.8 821.5 392.8 821.0 396.7C820.6 400.7 819.8 404.7 818.9 408.6C818.0 412.5 816.9 416.4 815.7 420.2C814.5 424.0 813.1 427.7 811.6 431.5C810.1 435.2 808.5 438.9 806.8 442.5C805.1 446.2 803.2 449.8 801.3 453.4C799.5 457.0 797.5 460.5 795.5 464.1C793.5 467.6 791.4 471.1 789.3 474.6C787.2 478.1 784.0 483.3 782.9 485.0L779.8 490.0C778.2 492.3 773.5 501.0 770.0 503.8C766.5 506.6 762.2 505.9 758.8 506.9C755.3 507.9 751.0 509.2 749.4 509.6Z" fill="#2c50b4" /><clipPath id="cLP"><path d="M450.8 343.6L450.8 343.6C452.6 342.5 458.1 338.9 461.9 337.1C465.6 335.3 469.5 333.8 473.5 332.7C477.4 331.5 481.5 330.7 485.5 330.2C489.5 329.6 493.6 329.4 497.6 329.5C501.7 329.5 505.8 329.8 509.7 330.4C513.7 331.0 517.7 331.8 521.6 332.9C525.4 334.0 529.2 335.3 532.9 336.8C536.6 338.4 540.1 340.1 543.5 342.1C546.9 344.0 550.2 346.2 553.3 348.5C556.5 350.8 559.5 353.3 562.4 355.9C565.3 358.5 568.1 361.3 570.8 364.2C573.5 367.1 576.1 370.2 578.6 373.4C581.1 376.5 583.5 379.8 585.8 383.1C588.1 386.5 590.4 389.9 592.6 393.4C594.8 396.9 596.9 400.5 599.0 404.1C601.0 407.7 603.0 411.4 605.0 415.0C607.0 418.7 608.9 422.4 610.9 426.1C612.8 429.8 614.6 433.5 616.5 437.2C618.4 440.9 620.2 444.5 622.1 448.2C623.9 451.8 625.8 455.4 627.6 459.0C629.5 462.6 631.4 466.2 633.3 469.8C635.2 473.3 637.1 476.8 639.0 480.3C641.0 483.8 643.0 487.3 645.0 490.7C647.1 494.1 649.2 497.5 651.3 500.9C653.5 504.3 655.7 507.6 658.0 510.9C660.3 514.2 662.7 517.4 665.2 520.7C667.7 523.9 670.2 527.0 672.9 530.1C675.6 533.2 678.3 536.3 681.1 539.2C684.0 542.2 686.9 545.1 689.9 547.8C692.9 550.6 696.0 553.2 699.2 555.7C702.4 558.2 705.7 560.6 709.0 562.8C712.4 565.0 715.8 567.1 719.4 569.0C722.9 570.9 726.5 572.6 730.2 574.1C733.9 575.5 737.6 576.8 741.5 577.9C745.4 578.9 749.3 579.8 753.3 580.4C757.3 580.9 761.4 581.3 765.6 581.3C769.7 581.3 776.2 580.7 778.3 580.6L778.3 580.6C776.1 581.4 769.3 583.9 765.0 585.3C760.7 586.7 755.4 588.0 752.5 588.8C749.6 589.5 748.6 589.8 747.8 590.0L747.8 590.0C745.8 590.4 739.8 591.5 735.8 592.1C731.8 592.8 727.8 593.3 723.8 593.7C719.8 594.2 715.8 594.5 711.8 594.7C707.7 595.0 703.7 595.1 699.7 595.2C695.7 595.3 691.6 595.2 687.6 595.1C683.6 595.0 679.6 594.8 675.6 594.5C671.6 594.2 667.6 593.8 663.6 593.3C659.6 592.8 655.7 592.2 651.7 591.5C647.8 590.9 643.9 590.1 640.0 589.2C636.1 588.4 632.2 587.4 628.3 586.4C624.5 585.4 620.7 584.2 616.9 583.0C613.1 581.8 609.3 580.5 605.6 579.1C601.9 577.7 598.2 576.2 594.5 574.6C590.9 573.0 587.3 571.4 583.7 569.6C580.1 567.8 576.6 566.0 573.1 564.1C569.7 562.1 566.2 560.1 562.9 558.0C559.5 555.9 556.2 553.6 552.9 551.3C549.6 549.0 546.4 546.7 543.3 544.2C540.1 541.7 537.1 539.2 534.0 536.5C531.0 533.8 528.1 531.1 525.2 528.3C522.3 525.5 519.5 522.5 516.7 519.6C514.0 516.6 511.3 513.5 508.7 510.4C506.1 507.3 503.6 504.1 501.1 500.8C498.7 497.6 496.3 494.3 494.0 491.0C491.7 487.6 489.5 484.2 487.4 480.8C485.2 477.4 483.2 474.0 481.2 470.5C479.2 467.0 477.4 463.4 475.6 459.9C473.8 456.3 472.2 452.7 470.6 449.0C469.0 445.4 467.6 441.7 466.2 438.0C464.8 434.3 463.6 430.5 462.4 426.7C461.2 423.0 460.2 419.1 459.2 415.3C458.2 411.5 457.3 407.6 456.5 403.7C455.7 399.8 455.0 395.9 454.4 391.9C453.7 388.0 453.2 384.0 452.8 380.0C452.3 376.0 451.9 372.0 451.6 368.0C451.3 364.0 451.1 359.9 451.0 355.8C450.8 351.8 450.8 345.6 450.8 343.6Z"/></clipPath><path d="M450.8 343.6L450.8 343.6C452.6 342.5 458.1 338.9 461.9 337.1C465.6 335.3 469.5 333.8 473.5 332.7C477.4 331.5 481.5 330.7 485.5 330.2C489.5 329.6 493.6 329.4 497.6 329.5C501.7 329.5 505.8 329.8 509.7 330.4C513.7 331.0 517.7 331.8 521.6 332.9C525.4 334.0 529.2 335.3 532.9 336.8C536.6 338.4 540.1 340.1 543.5 342.1C546.9 344.0 550.2 346.2 553.3 348.5C556.5 350.8 559.5 353.3 562.4 355.9C565.3 358.5 568.1 361.3 570.8 364.2C573.5 367.1 576.1 370.2 578.6 373.4C581.1 376.5 583.5 379.8 585.8 383.1C588.1 386.5 590.4 389.9 592.6 393.4C594.8 396.9 596.9 400.5 599.0 404.1C601.0 407.7 603.0 411.4 605.0 415.0C607.0 418.7 608.9 422.4 610.9 426.1C612.8 429.8 614.6 433.5 616.5 437.2C618.4 440.9 620.2 444.5 622.1 448.2C623.9 451.8 625.8 455.4 627.6 459.0C629.5 462.6 631.4 466.2 633.3 469.8C635.2 473.3 637.1 476.8 639.0 480.3C641.0 483.8 643.0 487.3 645.0 490.7C647.1 494.1 649.2 497.5 651.3 500.9C653.5 504.3 655.7 507.6 658.0 510.9C660.3 514.2 662.7 517.4 665.2 520.7C667.7 523.9 670.2 527.0 672.9 530.1C675.6 533.2 678.3 536.3 681.1 539.2C684.0 542.2 686.9 545.1 689.9 547.8C692.9 550.6 696.0 553.2 699.2 555.7C702.4 558.2 705.7 560.6 709.0 562.8C712.4 565.0 715.8 567.1 719.4 569.0C722.9 570.9 726.5 572.6 730.2 574.1C733.9 575.5 737.6 576.8 741.5 577.9C745.4 578.9 749.3 579.8 753.3 580.4C757.3 580.9 761.4 581.3 765.6 581.3C769.7 581.3 776.2 580.7 778.3 580.6L778.3 580.6C776.1 581.4 769.3 583.9 765.0 585.3C760.7 586.7 755.4 588.0 752.5 588.8C749.6 589.5 748.6 589.8 747.8 590.0L747.8 590.0C745.8 590.4 739.8 591.5 735.8 592.1C731.8 592.8 727.8 593.3 723.8 593.7C719.8 594.2 715.8 594.5 711.8 594.7C707.7 595.0 703.7 595.1 699.7 595.2C695.7 595.3 691.6 595.2 687.6 595.1C683.6 595.0 679.6 594.8 675.6 594.5C671.6 594.2 667.6 593.8 663.6 593.3C659.6 592.8 655.7 592.2 651.7 591.5C647.8 590.9 643.9 590.1 640.0 589.2C636.1 588.4 632.2 587.4 628.3 586.4C624.5 585.4 620.7 584.2 616.9 583.0C613.1 581.8 609.3 580.5 605.6 579.1C601.9 577.7 598.2 576.2 594.5 574.6C590.9 573.0 587.3 571.4 583.7 569.6C580.1 567.8 576.6 566.0 573.1 564.1C569.7 562.1 566.2 560.1 562.9 558.0C559.5 555.9 556.2 553.6 552.9 551.3C549.6 549.0 546.4 546.7 543.3 544.2C540.1 541.7 537.1 539.2 534.0 536.5C531.0 533.8 528.1 531.1 525.2 528.3C522.3 525.5 519.5 522.5 516.7 519.6C514.0 516.6 511.3 513.5 508.7 510.4C506.1 507.3 503.6 504.1 501.1 500.8C498.7 497.6 496.3 494.3 494.0 491.0C491.7 487.6 489.5 484.2 487.4 480.8C485.2 477.4 483.2 474.0 481.2 470.5C479.2 467.0 477.4 463.4 475.6 459.9C473.8 456.3 472.2 452.7 470.6 449.0C469.0 445.4 467.6 441.7 466.2 438.0C464.8 434.3 463.6 430.5 462.4 426.7C461.2 423.0 460.2 419.1 459.2 415.3C458.2 411.5 457.3 407.6 456.5 403.7C455.7 399.8 455.0 395.9 454.4 391.9C453.7 388.0 453.2 384.0 452.8 380.0C452.3 376.0 451.9 372.0 451.6 368.0C451.3 364.0 451.1 359.9 451.0 355.8C450.8 351.8 450.8 345.6 450.8 343.6Z" fill="#bd74e0" /><path d="M452.0 356.0L452.0 356.0C454.0 355.4 459.9 352.8 463.7 352.3C467.6 351.9 471.5 352.4 475.3 353.2C479.1 354.0 482.9 355.5 486.6 357.1C490.3 358.7 494.0 360.7 497.6 362.7C501.1 364.8 504.6 367.2 508.1 369.6C511.5 372.0 514.9 374.7 518.2 377.4C521.5 380.1 524.7 382.9 527.9 385.8C531.0 388.7 534.1 391.7 537.2 394.7C540.2 397.7 543.1 400.8 546.1 403.8C549.0 406.9 551.8 409.9 554.6 413.0C557.3 416.1 560.1 419.2 562.7 422.3C565.4 425.5 568.0 428.6 570.6 431.8C573.1 435.0 575.7 438.2 578.1 441.4C580.6 444.7 583.0 448.0 585.4 451.3C587.8 454.6 590.2 458.0 592.5 461.4C594.9 464.8 597.2 468.3 599.4 471.8C601.7 475.3 604.0 478.8 606.2 482.4C608.4 486.0 611.7 491.6 612.8 493.4L612.8 493.4C610.7 497.8 615.5 518.9 600.0 520.0C584.5 521.1 533.3 503.3 520.0 500.0L481.2 470.5C480.3 468.7 477.4 463.4 475.6 459.9C473.8 456.3 472.2 452.7 470.6 449.0C469.0 445.4 467.6 441.7 466.2 438.0C464.8 434.3 463.6 430.5 462.4 426.7C461.2 423.0 460.2 419.1 459.2 415.3C458.2 411.5 457.3 407.6 456.5 403.7C455.7 399.8 455.0 395.9 454.4 391.9C453.7 388.0 453.2 384.0 452.8 380.0C452.3 376.0 451.9 372.0 451.6 368.0C451.3 364.0 451.1 359.9 451.0 355.8C450.8 351.8 450.8 345.6 450.8 343.6Z" fill="#8b4de9" /><path d="M483.0 473.3L483.0 473.3C484.9 474.1 490.6 476.7 494.5 478.2C498.3 479.8 502.2 481.2 506.1 482.5C510.0 483.8 513.9 485.0 517.8 486.1C521.7 487.2 525.7 488.1 529.6 489.0C533.6 489.9 537.6 490.6 541.5 491.3C545.5 492.0 549.5 492.5 553.5 493.0C557.5 493.4 561.6 493.8 565.6 494.0C569.6 494.3 573.6 494.4 577.6 494.5C581.7 494.5 585.7 494.5 589.7 494.4C593.7 494.2 597.8 494.0 601.8 493.7C605.8 493.3 611.8 492.6 613.8 492.4L612.8 493.4C617.3 497.8 625.5 507.2 640.0 520.0C654.5 532.8 682.0 558.3 700.0 570.0C718.0 581.7 739.8 586.7 747.8 590.0L747.8 590.0C745.8 590.4 739.8 591.5 735.8 592.1C731.8 592.8 727.8 593.3 723.8 593.7C719.8 594.2 715.8 594.5 711.8 594.7C707.7 595.0 703.7 595.1 699.7 595.2C695.7 595.3 691.6 595.2 687.6 595.1C683.6 595.0 679.6 594.8 675.6 594.5C671.6 594.2 667.6 593.8 663.6 593.3C659.6 592.8 655.7 592.2 651.7 591.5C647.8 590.9 643.9 590.1 640.0 589.2C636.1 588.4 632.2 587.4 628.3 586.4C624.5 585.4 620.7 584.2 616.9 583.0C613.1 581.8 609.3 580.5 605.6 579.1C601.9 577.7 598.2 576.2 594.5 574.6C590.9 573.0 587.3 571.4 583.7 569.6C580.1 567.8 576.6 566.0 573.1 564.1C569.7 562.1 566.2 560.1 562.9 558.0C559.5 555.9 556.2 553.6 552.9 551.3C549.6 549.0 546.4 546.7 543.3 544.2C540.1 541.7 537.1 539.2 534.0 536.5C531.0 533.8 528.1 531.1 525.2 528.3C522.3 525.5 519.5 522.5 516.7 519.6C514.0 516.6 511.3 513.5 508.7 510.4C506.1 507.3 503.6 504.1 501.1 500.8C498.7 497.6 496.3 494.3 494.0 491.0C491.7 487.6 489.5 484.2 487.4 480.8C485.2 477.4 482.2 472.2 481.2 470.5Z" fill="#5e40c6" /><path d="M613.8 492.4L613.8 492.4C615.8 492.1 621.9 491.3 625.8 490.6C629.8 490.0 635.8 488.7 637.8 488.3L646.0 484.0L639.0 480.3C640.0 482.0 643.0 487.3 645.0 490.7C647.1 494.1 649.2 497.5 651.3 500.9C653.5 504.3 655.7 507.6 658.0 510.9C660.3 514.2 662.7 517.4 665.2 520.7C667.7 523.9 670.2 527.0 672.9 530.1C675.6 533.2 678.3 536.3 681.1 539.2C684.0 542.2 686.9 545.1 689.9 547.8C692.9 550.6 696.0 553.2 699.2 555.7C702.4 558.2 705.7 560.6 709.0 562.8C712.4 565.0 715.8 567.1 719.4 569.0C722.9 570.9 726.5 572.6 730.2 574.1C733.9 575.5 737.6 576.8 741.5 577.9C745.4 578.9 749.3 579.8 753.3 580.4C757.3 580.9 761.4 581.3 765.6 581.3C769.7 581.3 776.2 580.7 778.3 580.6L778.3 580.6C776.1 581.4 769.3 583.9 765.0 585.3C760.7 586.7 755.4 588.0 752.5 588.8C749.6 589.5 748.6 589.8 747.8 590.0L747.8 590.0C745.7 590.0 739.2 590.2 735.0 589.9C730.8 589.6 726.7 589.0 722.7 588.2C718.7 587.4 714.8 586.3 711.0 585.0C707.2 583.7 703.4 582.1 699.8 580.4C696.1 578.7 692.6 576.7 689.1 574.6C685.6 572.5 682.2 570.2 678.9 567.8C675.6 565.4 672.3 562.8 669.1 560.0C666.0 557.3 662.9 554.5 659.9 551.6C656.8 548.6 653.9 545.6 651.0 542.5C648.1 539.4 645.3 536.2 642.6 532.9C639.9 529.7 637.2 526.4 634.6 523.1C632.0 519.8 629.4 516.5 626.9 513.2C624.5 509.8 622.1 506.5 619.7 503.2C617.3 499.9 613.9 495.0 612.8 493.4Z" fill="#9360d0" clip-path="url(#cLP)"/><rect x="345.5" y="193.5" width="219" height="375" fill="none" stroke="#fff" stroke-width="1" shape-rendering="crispEdges"/><rect x="345.5" y="193.5" width="219" height="375" fill="none" stroke="#222" stroke-width="1" stroke-dasharray="4 4" shape-rendering="crispEdges"/><path d="M483.5 194.5 L361.5 452.5" stroke="#4a4ad6" stroke-width="1.2" opacity=".9"/><path d="M483.5 194.5 L361.5 452.5" stroke="#d4d4f4" stroke-width="0.45"/><circle cx="483.5" cy="194.5" r="4" fill="#0a0af0" stroke="#1414a0" stroke-width="0.8"/><path d="M416 335.6 l3.6 3.8 l-3.6 3.8 l-3.6 -3.8 Z" fill="#fff" stroke="#555" stroke-width="0.9"/><rect x="357.5" y="448.5" width="8" height="8" fill="#fff" stroke="#555" stroke-width="1"/></svg>
<div class="a" style="left:0;top:664px;width:1024px;height:65px;background:#f0f0f0"></div>
<div class="a" style="left:0;top:665px;width:1024px;height:2px;background:linear-gradient(180deg,#6a6a6a,#111)"></div>
<style>#pal i{position:absolute;top:0;width:14px;height:14px}</style>
<div class="a" id="pal" style="left:0;top:667px;width:1013px;height:14px;overflow:hidden"><i style="left:-4px;background:#e3dedb"></i><i style="left:10px;background:#2b2200"></i><i style="left:24px;background:#554400"></i><i style="left:38px;background:#806600"></i><i style="left:52px;background:#aa8800"></i><i style="left:66px;background:#d4aa00"></i><i style="left:80px;background:#ffcc00"></i><i style="left:94px;background:#ffd42a"></i><i style="left:108px;background:#ffdd55"></i><i style="left:122px;background:#ffe680"></i><i style="left:136px;background:#ffeeaa"></i><i style="left:150px;background:#fff6d5"></i><i style="left:164px;background:#28220b"></i><i style="left:178px;background:#504416"></i><i style="left:192px;background:#786721"></i><i style="left:206px;background:#a0892c"></i><i style="left:220px;background:#c8ab37"></i><i style="left:234px;background:#d3bc5f"></i><i style="left:248px;background:#decd87"></i><i style="left:262px;background:#e9ddaf"></i><i style="left:276px;background:#f4eed7"></i><i style="left:290px;background:#24221c"></i><i style="left:304px;background:#484537"></i><i style="left:318px;background:#6c6753"></i><i style="left:332px;background:#918a6f"></i><i style="left:346px;background:#aca793"></i><i style="left:360px;background:#c8c4b7"></i><i style="left:374px;background:#e3e2db"></i><i style="left:388px;background:#222b00"></i><i style="left:402px;background:#445500"></i><i style="left:416px;background:#668000"></i><i style="left:430px;background:#88aa00"></i><i style="left:444px;background:#aad400"></i><i style="left:458px;background:#ccff00"></i><i style="left:472px;background:#d4ff2a"></i><i style="left:486px;background:#ddff55"></i><i style="left:500px;background:#e5ff80"></i><i style="left:514px;background:#eeffaa"></i><i style="left:528px;background:#f6ffd5"></i><i style="left:542px;background:#22280b"></i><i style="left:556px;background:#445016"></i><i style="left:570px;background:#677821"></i><i style="left:584px;background:#89a02c"></i><i style="left:598px;background:#abc837"></i><i style="left:612px;background:#bcd35f"></i><i style="left:626px;background:#cdde87"></i><i style="left:640px;background:#dde9af"></i><i style="left:654px;background:#eef4d7"></i><i style="left:668px;background:#22241c"></i><i style="left:682px;background:#454837"></i><i style="left:696px;background:#676c53"></i><i style="left:710px;background:#8a916f"></i><i style="left:724px;background:#a7ac93"></i><i style="left:738px;background:#c4c8b7"></i><i style="left:752px;background:#e2e3db"></i><i style="left:766px;background:#112b00"></i><i style="left:780px;background:#225500"></i><i style="left:794px;background:#338000"></i><i style="left:808px;background:#44aa00"></i><i style="left:822px;background:#55d400"></i><i style="left:836px;background:#66ff00"></i><i style="left:850px;background:#7fff2a"></i><i style="left:864px;background:#99ff55"></i><i style="left:878px;background:#b3ff80"></i><i style="left:892px;background:#ccffaa"></i><i style="left:906px;background:#e5ffd5"></i><i style="left:920px;background:#17280b"></i><i style="left:934px;background:#2d5016"></i><i style="left:948px;background:#447821"></i><i style="left:962px;background:#5aa02c"></i><i style="left:976px;background:#71c837"></i><i style="left:990px;background:#8dd35f"></i><i style="left:1004px;background:#a5dc82"></i></div>
<div class="a" style="left:0;top:666px;width:2px;height:16px;background:#222"></div>
<div class="a" style="left:0;top:681px;width:1024px;height:3px;background:#fafafa"></div>
<div class="a" style="left:1015.5px;top:672px;border:4.5px solid transparent;border-right:6px solid #000;border-left:0"></div>
<div class="a" style="left:0;top:684px;width:1024px;height:15px;background:#efefef"></div>
<div class="a" style="left:6px;top:687.5px;border:4px solid transparent;border-right:4.5px solid #333;border-left:0"></div>
<div class="a" style="left:1005px;top:687.5px;border:4px solid transparent;border-left:4.5px solid #333;border-right:0"></div>
<div class="a" style="left:201px;top:684.5px;width:161px;height:14px;border:1px solid #8c8c8c;border-radius:2px;background:linear-gradient(180deg,#f6f6f6 0,#e6e6e6 50%,#cbcbcb 100%)">
<div class="a" style="left:76px;top:3px;width:1.3px;height:7px;background:#444;box-shadow:3px 0 0 #444,6px 0 0 #444,1px 0 0 #fff,4px 0 0 #fff,7px 0 0 #fff"></div></div>
<span class="t" style="left:2.5px;top:699.5px;font-size:12px;color:#000;transform:scaleX(0.9539);">Relleno:</span>
<span class="t" style="left:2.5px;top:713.5px;font-size:12px;color:#000;transform:scaleX(0.8790);">Trazo:</span>
<div class="a" style="left:48px;top:700px;width:74px;height:29px;background:#fbde05"></div>
<span class="t" style="left:126.5px;top:706.5px;font-size:12px;color:#000;transform:scaleX(0.8681);">O:</span>
<div class="a" style="left:140px;top:703px;width:37px;height:21px;background:#fff;border:1px solid #abadb3;border-top-color:#8e8f97"></div>
<span class="t" style="left:144px;top:706.5px;font-size:12px;color:#000;transform:scaleX(0.9236);">100</span>
<div class="a" style="left:177px;top:703px;width:10px;height:21px;background:#f0f0f0">
<div class="a" style="left:0;top:0;width:10px;height:10px;border:1px solid #c3c5cf;background:#f4f4f4"></div>
<div class="a" style="left:0;top:11px;width:10px;height:10px;border:1px solid #9fb6d6;background:#e4ecf7"></div>
<div class="a" style="left:2px;top:3.5px;border:3px solid transparent;border-bottom:3px solid #a8a8b0;border-top:0"></div>
<div class="a" style="left:2px;top:15px;border:3px solid transparent;border-top:3px solid #4a5a9a;border-bottom:0"></div>
</div>
<div class="a" style="left:190.5px;top:701px;width:1px;height:27px;background:#d0d0d0;box-shadow:1px 0 0 #fff"></div>
<svg class="a" style="left:197.5px;top:707.5px" width="11.5" height="11.5" viewBox="0 0 14 14">
<path d="M1.6 8 Q7 2.6 12.4 8 Q7 12.6 1.6 8 Z" fill="#fff" stroke="#222" stroke-width="0.9"/>
<circle cx="7" cy="8" r="2.3" fill="#222"/>
<path d="M2.6 4.6 L3.6 6 M5 3.2 L5.6 4.8 M7.6 2.8 L7.6 4.4 M10 3.4 L9.4 4.9 M12 5 L11 6.2" stroke="#222" stroke-width="0.9"/>
</svg>
<svg class="a" style="left:216.5px;top:707px" width="10.5" height="12" viewBox="0 0 13 15">
<path d="M4.4 7 V4.4 Q4.4 2 6.8 2 Q9.2 2 9.2 4.4 V5" fill="none" stroke="#555" stroke-width="1.1"/>
<rect x="2.6" y="6.6" width="7.6" height="6" rx="0.8" fill="#faf0c0" stroke="#7a7050" stroke-width="0.9"/>
<rect x="3.8" y="8" width="5.2" height="1" fill="#fff8d8"/>
</svg>
<div class="a" style="left:231.5px;top:700px;width:59px;height:28px;background:#fff;border:1px solid #c9c9c9"></div>
<div class="a" style="left:236px;top:712.5px;width:2px;height:2px;background:#000"></div>
<span class="t" style="left:240px;top:706.5px;font-size:10.5px;color:#000;font-weight:700;transform:scaleX(0.9002);">Capa 1</span>
<div class="a" style="left:291px;top:700px;width:16px;height:28px;border:1px solid #9a9a9a;background:linear-gradient(180deg,#f6f6f6,#e2e2e2 50%,#d2d2d2)"></div>
<div class="a" style="left:294.5px;top:711.5px;border:4.5px solid transparent;border-top:5px solid #000;border-bottom:0"></div>
<span class="t" style="left:310px;top:706.5px;font-size:12px;color:#000;transform:scaleX(0.9776);"><b>Fin</b> del degradado lineal seleccionado de 3 tiradores de degradado en 1 objeto seleccionado</span>
<div class="a" style="left:883px;top:701px;width:1px;height:27px;background:#d0d0d0;box-shadow:1px 0 0 #fff"></div>
<span class="t" style="left:887px;top:701px;font-size:10.5px;color:#000;transform:scaleX(0.8063);">X:</span>
<span class="t" style="left:887px;top:713.5px;font-size:10.5px;color:#000;transform:scaleX(0.8562);">Y:</span>
<span class="t" style="left:911px;top:701.2px;font-size:11px;color:#000;font-family:'Liberation Mono';transform:scaleX(1.0752);">85,64</span>
<span class="t" style="left:905px;top:713.5px;font-size:11px;color:#000;font-family:'Liberation Mono';transform:scaleX(1.0477);">219,52</span>
<span class="t" style="left:956.5px;top:706.5px;font-size:12px;color:#000;transform:scaleX(0.8433);">Z:</span>
<div class="a" style="left:967px;top:703px;width:46px;height:21px;background:#fff;border:1px solid #abadb3;border-top-color:#8e8f97"></div>
<span class="t" style="left:974.5px;top:706.5px;font-size:12px;color:#000;transform:scaleX(0.8794);">253%</span>
<div class="a" style="left:1013px;top:703px;width:11px;height:21px;background:#f0f0f0">
<div class="a" style="left:0;top:0;width:10px;height:10px;border:1px solid #9fb6d6;background:#e4ecf7"></div>
<div class="a" style="left:0;top:11px;width:10px;height:10px;border:1px solid #9fb6d6;background:#e4ecf7"></div>
<div class="a" style="left:2px;top:3.5px;border:3px solid transparent;border-bottom:3px solid #4a5a9a;border-top:0"></div>
<div class="a" style="left:2px;top:15px;border:3px solid transparent;border-top:3px solid #4a5a9a;border-bottom:0"></div>
</div>
<div class="a" style="left:0;top:728px;width:1024px;height:40px;overflow:hidden;background:#56635d">
<div class="a" style="left:-10px;top:-10px;width:1044px;height:60px;filter:blur(2.5px);transform:skewX(-6deg);background:linear-gradient(90deg,#3f4a48 0,#4a5652 4%,#56625c 9%,#66736d 13%,#78867f 17%,#76847d 19.5%,#5e6b65 22%,#4b5654 24%,#39424a 30%,#3a424a 36%,#5a6e66 37.6%,#64786e 41%,#30383a 42.2%,#2b3335 45%,#5e7268 46.2%,#62766c 48%,#2d3537 49.2%,#2a3234 51.4%,#64786e 52.6%,#6c7e74 56%,#4a4a44 57.4%,#403c38 62%,#62706a 63.4%,#66746c 68%,#56645e 72%,#4e5c56 76%,#5c6a64 80%,#4c5a54 84%,#5a6862 88%,#55635d 92%,#4e5c56 96%,#5b6963 100%)"></div>
<div class="a" style="left:588px;top:-6px;width:50px;height:28px;border-radius:6px 10px 14px 10px;background:#2b4a90;filter:blur(3px)"></div>
<div class="a" style="left:730px;top:0;width:90px;height:40px;background:radial-gradient(ellipse 40px 26px at 50% 60%,rgba(40,52,72,.55),rgba(40,52,72,0))"></div>
<div class="a" style="left:0;top:0;width:1024px;height:40px;background:linear-gradient(180deg,rgba(20,24,28,.55) 0,rgba(255,255,255,.18) 1px,rgba(255,255,255,.08) 2px,rgba(255,255,255,0) 50%,rgba(0,0,0,.12) 100%)"></div>
</div>
<svg class="a" style="left:6px;top:727px" width="42" height="41" viewBox="0 0 42 41">
<defs><radialGradient id="orb" cx="50%" cy="75%" r="70%"><stop offset="0" stop-color="#4fc3ef"/><stop offset="0.45" stop-color="#2a7fc6"/><stop offset="1" stop-color="#123a78"/></radialGradient>
<linearGradient id="orbgl" x1="0" y1="0" x2="0" y2="1"><stop offset="0" stop-color="#fff" stop-opacity=".75"/><stop offset="1" stop-color="#fff" stop-opacity=".1"/></linearGradient></defs>
<circle cx="21" cy="21" r="19.4" fill="#1c2f44" opacity=".8"/>
<circle cx="21" cy="21" r="18.2" fill="url(#orb)" stroke="#a9c7e6" stroke-width="1"/>
<path d="M4.6 17 A17 17 0 0 1 37.4 17 Q21 25 4.6 17 Z" fill="url(#orbgl)"/>
<g transform="translate(-4.2,-4.4) scale(1.22)"><path d="M13.6 13.6 Q16.6 11.6 20 13.4 L18.6 19.4 Q15.4 17.8 12.2 19.6 Z" fill="#f2642a"/>
<path d="M21.6 13.8 Q25 15.6 28.6 13.8 L27 19.8 Q23.6 21.6 20.2 19.8 Z" fill="#8cc63e"/>
<path d="M11.8 21 Q15 19.2 18.2 21 L16.8 27 Q13.6 25.2 10.4 27 Z" fill="#3a9ee8"/>
<path d="M19.8 21.4 Q23.2 23.2 26.6 21.4 L25.2 27.4 Q21.8 29.2 18.4 27.4 Z" fill="#fcc62a"/></g>
</svg>
<div class="a" style="left:60px;top:729.5px;width:58px;height:38.5px;border:1px solid rgba(20,26,34,.85);border-radius:3px;background:linear-gradient(135deg,rgba(215,225,222,.55),rgba(120,134,130,.3));box-shadow:inset 0 0 0 1px rgba(255,255,255,.45)"></div>
<div class="a" style="left:245.5px;top:729.5px;width:58.5px;height:38.5px;border:1px solid rgba(20,26,34,.85);border-radius:3px;background:linear-gradient(135deg,#a9b1b6,#3c4a5c);box-shadow:inset 0 0 0 1px rgba(255,255,255,.45)"></div>
<div class="a" style="left:308px;top:729.5px;width:58px;height:38.5px;border:1px solid rgba(20,26,34,.85);border-radius:3px;background:linear-gradient(135deg,#c3c7cc,#7e8791);box-shadow:inset 0 0 0 1px rgba(255,255,255,.45)"></div>
<svg class="a" style="left:71px;top:732px" width="36" height="34" viewBox="0 0 36 34">
<path d="M3 8 Q3 6 5 6 H11 L13 8.4 H31 Q33 8.4 33 10.4 V28 H3 Z" fill="#e9c35e" stroke="#b48a28" stroke-width="0.8"/>
<path d="M5 11 H31 V28 H5 Z" fill="#fbf3d2"/>
<path d="M3 13 H33 V29 Q33 30 32 30 H4 Q3 30 3 29 Z" fill="#f6dc8c" stroke="#c79c34" stroke-width="0.8"/>
<rect x="6" y="6.4" width="3" height="2" fill="#3bb54a"/><rect x="14.6" y="9" width="3" height="2" fill="#e0382c"/><rect x="22" y="9" width="3" height="2" fill="#3a8ee0"/>
<path d="M7 31.6 V22 Q7 20.4 8.8 20.4 H27.2 Q29 20.4 29 22 V31.6 H23.4 V26.6 H12.6 V31.6 Z" fill="#7fd0f4" stroke="#2f86c0" stroke-width="0.9"/>
<path d="M8.4 22 H27.6 V24 H8.4 Z" fill="#d4f0fc"/>
<path d="M10 14 L10.8 18.6 L15 19.4 L10.8 20.2 L10 24.6 L9.2 20.2 L5 19.4 L9.2 18.6 Z" fill="#fff" opacity=".9"/>
</svg>
<svg class="a" style="left:135px;top:732px" width="32" height="32" viewBox="0 0 32 32">
<circle cx="16" cy="16" r="15" fill="#fff"/>
<path d="M16 16 L3 8.5 A15 15 0 0 1 29 8.5 Z" fill="#e53f32"/>
<path d="M16 16 L29 8.5 A15 15 0 0 1 16 31 Z" fill="#fccd2a"/>
<path d="M16 16 L16 31 A15 15 0 0 1 3 8.5 Z" fill="#2fa24e"/>
<path d="M16 9 H29.3 A15 15 0 0 0 3 8.5 L9.9 19.5 Z" fill="#e53f32"/>
<path d="M22.1 19.5 L16 31 A15 15 0 0 0 29.3 9 H16 Z" fill="#fccd2a"/>
<path d="M9.9 19.5 L3 8.5 A15 15 0 0 0 16 31 L22.1 19.5 Z" fill="#2fa24e"/>
<circle cx="16" cy="16" r="7" fill="#fff"/><circle cx="16" cy="16" r="5.6" fill="#4c8bf0"/>
</svg>
<svg class="a" style="left:197px;top:732px" width="32" height="32" viewBox="0 0 32 32">
<circle cx="16" cy="16" r="14.6" fill="#141414" stroke="#e02028" stroke-width="1.6"/>
<g fill="#e4202a"><circle cx="15" cy="17" r="6.8"/>
<rect x="13.2" y="7.6" width="3.6" height="4" /><rect x="13.2" y="22.6" width="3.6" height="4"/><rect x="5.6" y="15.2" width="4" height="3.6"/>
<rect x="7.4" y="9.6" width="4" height="3.6" transform="rotate(45 9.4 11.4)"/><rect x="7.4" y="21" width="4" height="3.6" transform="rotate(-45 9.4 22.8)"/><rect x="18.6" y="21" width="4" height="3.6" transform="rotate(45 20.6 22.8)"/>
<path d="M19 12.6 L22.6 6.6 L26.4 12.6 H24.2 Q24.6 16 23 18.8 L20.6 17.6 Q21.6 15 21.2 12.6 Z"/></g>
<circle cx="15" cy="17" r="3.6" fill="#141414"/><path d="M15 14.6 A2.4 2.4 0 1 0 17.4 17 H15.6" fill="none" stroke="#e4202a" stroke-width="1.2"/>
</svg>
<svg class="a" style="left:258px;top:730px" width="34" height="36" viewBox="0 0 34 36">
<defs><radialGradient id="ffo" cx="60%" cy="20%" r="90%"><stop offset="0" stop-color="#ffe14a"/><stop offset="0.45" stop-color="#ff8a1e"/><stop offset="0.85" stop-color="#f0264c"/><stop offset="1" stop-color="#d81a6a"/></radialGradient>
<radialGradient id="ffp" cx="50%" cy="40%" r="60%"><stop offset="0" stop-color="#9a5cf4"/><stop offset="1" stop-color="#5a2ac4"/></radialGradient></defs>
<path d="M21 2 Q23 6 27.4 9.4 Q32.6 14 32 21.6 Q30.6 33.4 17.4 34.4 Q4 33.4 2.6 21.4 Q2.4 14 7 9 Q6.4 11.4 7.6 13 Q11 8.6 16.6 9 Q15 5.4 21 2 Z" fill="url(#ffo)"/>
<circle cx="17" cy="21" r="8" fill="url(#ffp)"/>
<path d="M8 14 Q12 12.4 15 15 Q19.6 14.6 21 17 Q18 18 17.4 20.4 Q13 21.6 12 25.6 Q7 22 8 14 Z" fill="#ff9a1e"/>
<path d="M21 2 Q23 6 27.4 9.4 Q32.6 14 32 21.6 Q30 16 25 14.6 Q26 10 21 2 Z" fill="#ffd83a"/>
</svg>
<svg class="a" style="left:321px;top:733px" width="32" height="32" viewBox="0 0 32 32">
<defs><linearGradient id="ikg" x1="0" y1="0" x2="1" y2="1"><stop offset="0" stop-color="#fff"/><stop offset="1" stop-color="#8e98a4"/></linearGradient></defs>
<path d="M16 1.6 L2.4 15 Q1.4 17 3.6 17.8 L8.6 18.6 Q10.6 20 12.6 19 L15 20.4 L18 19 Q20 20 22.4 18.8 L28.6 17.8 Q31 16.8 29.6 14.8 Z" fill="#111"/>
<path d="M16 3.6 L10.4 9.4 L13 11 L14.8 9.4 L16.8 11.8 L18.6 9.8 L21.6 10.2 Z" fill="url(#ikg)"/>
<path d="M7.4 20.6 Q10.4 20.2 12.4 21.6 Q9.6 23 7.4 22 Z M15.4 22 Q19 21 21.8 22.4 Q19 24.4 16.2 24 Z M11.4 24.4 Q14.8 24 16.8 26 Q15.8 28.6 13.4 27.8 Q14 26 11.4 25.4 Z M20.6 25 L22.6 25.4 L21.6 26.8 Z M23.6 21 L25.6 21.4 L24.6 22.6 Z" fill="#111"/>
</svg>
<span class="t" style="left:807.5px;top:739px;font-size:12px;color:#fff;transform:scaleX(0.8429);">ES</span>
<div class="a" style="left:836.5px;top:746px;border:4.7px solid transparent;border-bottom:5.6px solid #fff;border-top:0"></div>
<svg class="a" style="left:856px;top:739px" width="20" height="20" viewBox="0 0 20 20">
<path d="M2.6 2.6 V17.4" stroke="#fff" stroke-width="1.5"/><path d="M3.6 3 Q7 1.6 9.4 3.4 Q12 5 15 3.6 V10.4 Q12 12 9.4 10.2 Q7 8.6 3.6 10 Z" fill="#fff"/>
<circle cx="13.4" cy="13.8" r="4.2" fill="#e0202a" stroke="#fff" stroke-width="0.9"/><path d="M11.6 12 l3.6 3.6 M15.2 12 l-3.6 3.6" stroke="#fff" stroke-width="1.3"/>
</svg>
<svg class="a" style="left:881px;top:739px" width="20" height="20" viewBox="0 0 20 20">
<rect x="6" y="5" width="11" height="8.6" fill="none" stroke="#fff" stroke-width="1.4"/><path d="M8.6 16.8 H14.4 M11.5 13.8 V16.8" stroke="#fff" stroke-width="1.4"/>
<path d="M3 2.4 V6 M5.4 2.4 V6" stroke="#fff" stroke-width="1"/><rect x="2" y="5" width="4.4" height="4.4" fill="#fff"/><path d="M4.2 9.4 V12.6 Q4.2 14 6 14" fill="none" stroke="#fff" stroke-width="1"/>
</svg>
<svg class="a" style="left:904px;top:739px" width="20" height="20" viewBox="0 0 20 20">
<path d="M2.4 7.4 H5.4 L9.6 3.4 V16 L5.4 12.2 H2.4 Z" fill="#fff"/>
<path d="M11.6 7.4 Q13 9.8 11.6 12.2 M13.6 5.6 Q16 9.8 13.6 14 M15.8 4 Q19 9.8 15.8 15.6" fill="none" stroke="#fff" stroke-width="1" opacity=".9"/>
</svg>
<span class="t" style="left:942px;top:734.5px;font-size:12px;color:#fff;transform:scaleX(0.9523);">05:42 p.m.</span>
<span class="t" style="left:939.5px;top:750.5px;font-size:12px;color:#fff;transform:scaleX(0.9740);">27/03/2022</span>
<div class="a" style="left:1010.5px;top:729px;width:14px;height:39px;border:1px solid rgba(20,26,34,.8);background:linear-gradient(90deg,rgba(255,255,255,.35),rgba(255,255,255,.12));box-shadow:inset 1px 1px 0 rgba(255,255,255,.4)"></div>
</body></html>
